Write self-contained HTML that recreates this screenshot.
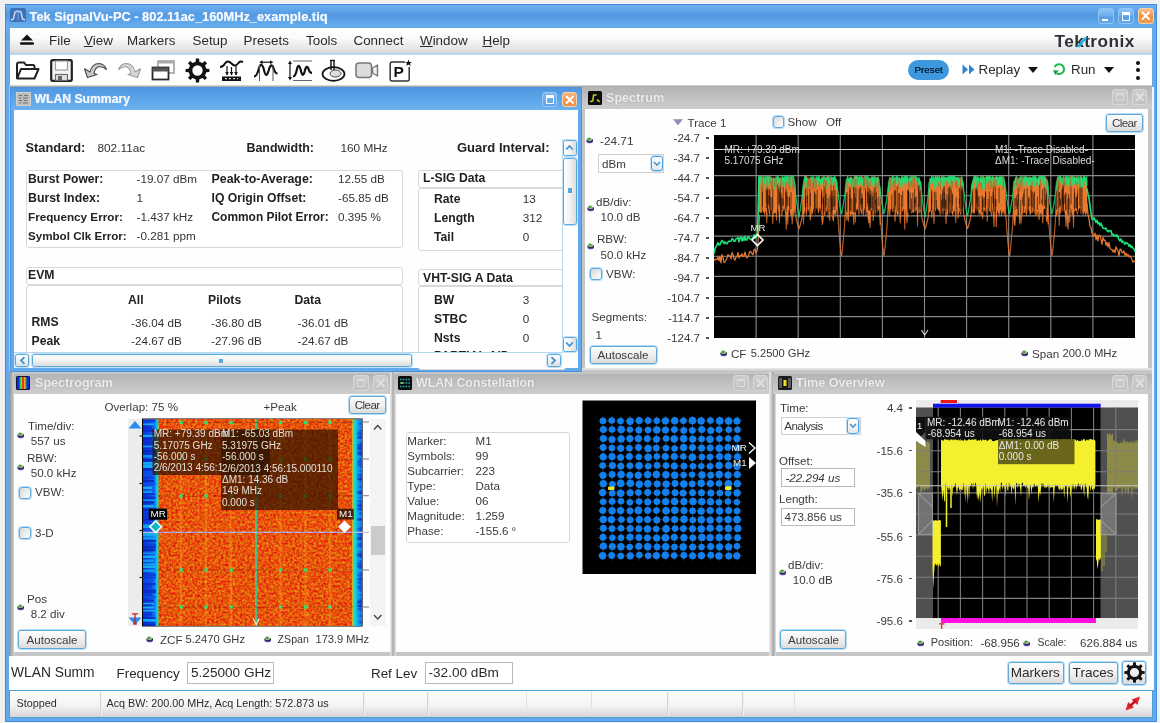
<!DOCTYPE html><html><head><meta charset="utf-8"><title>SignalVu</title><style>
html,body{margin:0;padding:0;}
body{width:1160px;height:723px;position:relative;overflow:hidden;background:#f0f0f0;font-family:"Liberation Sans",sans-serif;}
div,span.t,svg{position:absolute;box-sizing:border-box;}
span.t{white-space:pre;}
.btn{border:1px solid #5fa8dc;border-radius:3px;background:linear-gradient(#fdfdfd,#f0f0f0 50%,#dcdcdc);box-shadow:0 0 0 1px #b8dcf4;}
.gb{border:1px solid #d8d8d8;border-radius:3px;background:#fff;}
.tb{border:1px solid #b9b9b9;background:#fff;}
.cb{border:1px solid #5fa8dc;border-radius:3px;background:linear-gradient(135deg,#d8d8d8,#fff);box-shadow:0 0 0 1px #b8dcf4;}
.wt{background:linear-gradient(#b4b4b4,#c4c4c4 60%,#cdcdcd);}
.wtx{color:#f4f4f4;font-weight:bold;text-shadow:0 0 1px #999;}
</style></head><body><div id="root" style="left:0;top:0;width:1160px;height:723px;filter:blur(0.55px);background:#f0f0f0;">
<div style="left:5px;top:4px;width:1152px;height:717.5px;background:#64a9ec;border:1px solid #3f8ce0;"></div>
<div style="left:6px;top:5px;width:1150px;height:22px;background:linear-gradient(#70b2f2,#5299e2 45%,#5ba3e8 70%,#68aeee);"></div>
<svg style="left:10px;top:8px" width="16" height="14" viewBox="0 0 16 14"><rect width="16" height="14" rx="2" fill="#3d72b8"/><path d="M1 12 L3.5 11 L5 4 L8 3 L11 4 L12.5 11 L15 12" stroke="#c8d4f4" stroke-width="1.5" fill="none"/><path d="M8 3V12" stroke="#88a8e0" stroke-width="1"/></svg>
<span class="t " style="left:29.5px;top:8.5px;font-size:12.83px;line-height:15.4px;font-weight:bold;color:#f4f8ff;text-shadow:0 0 1px #cfe2f8;">Tek SignalVu-PC - 802.11ac_160MHz_example.tiq</span>
<div style="left:1098px;top:8px;width:15.5px;height:16.2px;background:linear-gradient(#8cc2f6,#6aacec 50%,#5a9fe4 55%,#62a6e8);border:1px solid #8ec4f6;border-radius:3px;"></div>
<div style="left:1102px;top:18.5px;width:6px;height:2.5px;background:#fff;"></div>
<div style="left:1118px;top:8px;width:15.5px;height:16.2px;background:linear-gradient(#8cc2f6,#6aacec 50%,#5a9fe4 55%,#62a6e8);border:1px solid #8ec4f6;border-radius:3px;"></div>
<div style="left:1122px;top:12px;width:8px;height:8.5px;border:1.5px solid #fff;border-top-width:3px;"></div>
<div style="left:1138px;top:8px;width:15.5px;height:16.2px;background:linear-gradient(#f8c090,#f0903c 55%,#f09c50);border:1px solid #f8d0a8;border-radius:3px;"></div>
<svg style="left:1138px;top:8.3px" width="15.5" height="15.5" viewBox="0 0 15.5 15.5"><path d="M4 4 L11.5 11.5 M11.5 4 L4 11.5" stroke="#fff" stroke-width="2"/></svg>
<div style="left:10px;top:27.5px;width:1142px;height:25.5px;background:linear-gradient(#ffffff,#fbfbfb 40%,#e4e4e4 85%,#d4d4d4);"></div>
<svg style="left:19px;top:34px" width="16" height="12" viewBox="0 0 16 12"><path d="M8 0.5 L14 6.5 H2 Z" fill="#111"/><rect x="1" y="8.2" width="14" height="2.6" rx="1" fill="#111"/></svg>
<span class="t " style="left:49px;top:33.0px;font-size:13.4px;line-height:16.1px;color:#2a2a2a;">File</span>
<span class="t " style="left:84px;top:33.0px;font-size:13.4px;line-height:16.1px;color:#2a2a2a;"><u>V</u>iew</span>
<span class="t " style="left:127px;top:33.0px;font-size:13.4px;line-height:16.1px;color:#2a2a2a;">Markers</span>
<span class="t " style="left:192.5px;top:33.0px;font-size:13.4px;line-height:16.1px;color:#2a2a2a;">Setup</span>
<span class="t " style="left:243.5px;top:33.0px;font-size:13.4px;line-height:16.1px;color:#2a2a2a;">Presets</span>
<span class="t " style="left:306px;top:33.0px;font-size:13.4px;line-height:16.1px;color:#2a2a2a;">Tools</span>
<span class="t " style="left:353.5px;top:33.0px;font-size:13.4px;line-height:16.1px;color:#2a2a2a;">Connect</span>
<span class="t " style="left:420px;top:33.0px;font-size:13.4px;line-height:16.1px;color:#2a2a2a;"><u>W</u>indow</span>
<span class="t " style="left:482.5px;top:33.0px;font-size:13.4px;line-height:16.1px;color:#2a2a2a;"><u>H</u>elp</span>
<span class="t tek" style="left:1054.5px;top:30.9px;font-size:17.2px;line-height:20.6px;font-weight:bold;color:#2e3038;letter-spacing:0.45px;">Tektronix</span>
<svg style="left:1070px;top:33px" width="20" height="16" viewBox="1070 33 20 16"><path d="M1076.2 47.3 L1084.3 37.4 L1087.6 37.4 L1079.6 47.3 Z" fill="#1cb4e4"/></svg>
<div style="left:10px;top:54.5px;width:1142px;height:30.5px;background:#fff;"></div>
<div style="left:10px;top:53px;width:1142px;height:1.5px;background:#bcd8f0;"></div>
<div style="left:9px;top:84.6px;width:1143px;height:2.4px;background:linear-gradient(#e4e4e4,#9a9a9a);"></div>
<svg style="left:15px;top:59px;" width="25" height="22" viewBox="0 0 25 22"><path d="M2 19.5 V5.5 Q2 3.5 4 3.5 H9 L11 6 H18 Q19.5 6 19.5 8 V9.5" fill="none" stroke="#222" stroke-width="2"/><path d="M2.2 19.5 L6 10 H23.5 L19.5 19.5 Z" fill="#fff" stroke="#222" stroke-width="2" stroke-linejoin="round"/></svg>
<svg style="left:49.5px;top:59px;" width="23" height="23" viewBox="0 0 23 23"><rect x="1.2" y="1.2" width="20.6" height="20.6" rx="1.5" fill="#f4f4f4" stroke="#222" stroke-width="2.2"/><rect x="5.5" y="2" width="12" height="9" fill="#fff" stroke="#9a9a9a" stroke-width="1.2"/><rect x="5.5" y="15.5" width="12" height="6" fill="#e4e4e4" stroke="#6a6a6a" stroke-width="1.2"/><rect x="8" y="17" width="4" height="4" fill="#666"/></svg>
<svg style="left:83px;top:60px;" width="25" height="20" viewBox="0 0 25 20"><path d="M7 12 Q9 3.5 16 3.5 Q21.5 3.8 23.5 9.5 Q20.5 6.5 16.5 6.8 Q12 7.2 11 13.5 L14 14.5 L4.5 17.5 L1.5 8.8 L4.6 10.6 Z" fill="#c8c8c8" stroke="#4a4a4a" stroke-width="1.1" stroke-linejoin="round"/></svg>
<svg style="left:117px;top:60px;" width="25" height="20" viewBox="0 0 25 20"><path d="M18 12 Q16 3.5 9 3.5 Q3.5 3.8 1.5 9.5 Q4.5 6.5 8.5 6.8 Q13 7.2 14 13.5 L11 14.5 L20.5 17.5 L23.5 8.8 L20.4 10.6 Z" fill="#d8d8d8" stroke="#9a9a9a" stroke-width="1.1" stroke-linejoin="round"/></svg>
<svg style="left:150.5px;top:59px;" width="25" height="22" viewBox="0 0 25 22"><rect x="7" y="2" width="16" height="12" fill="#fff" stroke="#8a8a8a" stroke-width="1.3"/><rect x="7" y="2" width="16" height="2.5" fill="#aaa"/><rect x="1.5" y="8.5" width="16" height="12" fill="#fff" stroke="#2a2a2a" stroke-width="1.8"/><rect x="1.5" y="8.5" width="16" height="4" fill="#555"/></svg>
<svg style="left:185px;top:58px;" width="25" height="25" viewBox="0 0 25 25"><path d="M21.31 10.66 L24.40 10.92 L24.40 14.08 L21.31 14.34 L20.03 17.43 L22.03 19.80 L19.80 22.03 L17.43 20.03 L14.34 21.31 L14.08 24.40 L10.92 24.40 L10.66 21.31 L7.57 20.03 L5.20 22.03 L2.97 19.80 L4.97 17.43 L3.69 14.34 L0.60 14.08 L0.60 10.92 L3.69 10.66 L4.97 7.57 L2.97 5.20 L5.20 2.97 L7.57 4.97 L10.66 3.69 L10.92 0.60 L14.08 0.60 L14.34 3.69 L17.43 4.97 L19.80 2.97 L22.03 5.20 L20.03 7.57 Z M17.70 12.50 A5.2 5.2 0 1 0 7.30 12.50 A5.2 5.2 0 1 0 17.70 12.50 Z" fill="#111" fill-rule="evenodd"/></svg>
<svg style="left:219px;top:59px;" width="25" height="23" viewBox="0 0 25 23"><path d="M1 8 Q4 8 6 4.5 Q8.5 0.5 12.5 4.5 Q16 8.5 19 4.5 Q21 1.5 24 3" fill="none" stroke="#111" stroke-width="2"/><path d="M8 7 V16 M12.5 8 V16 M17 7 V16" stroke="#111" stroke-width="1.2"/><path d="M6.2 13 L8 16.5 L9.8 13 Z M10.7 13 L12.5 16.5 L14.3 13 Z M15.2 13 L17 16.5 L18.8 13 Z" fill="#111"/><rect x="3" y="17.5" width="19" height="4.5" fill="#111"/><path d="M6 19.7 H19" stroke="#fff" stroke-width="1" stroke-dasharray="2 2"/></svg>
<svg style="left:253px;top:59px;" width="26" height="23" viewBox="0 0 26 23"><path d="M1 17.5 Q4 17.5 6 9 Q8 2.5 10.5 9 Q13 21 15.5 12 Q18 2.5 20.5 9 Q22 14.5 24.5 14.5" fill="none" stroke="#111" stroke-width="2.1"/><path d="M6.5 6 V22 M20 6 V22" stroke="#555" stroke-width="1"/><path d="M7 3.2 H19.5" stroke="#111" stroke-width="1.2"/><path d="M6.5 3.2 L9.5 1.2 V5.2 Z M20 3.2 L17 1.2 V5.2 Z" fill="#111"/></svg>
<svg style="left:286.5px;top:59px;" width="26" height="23" viewBox="0 0 26 23"><path d="M3 4 V19" stroke="#111" stroke-width="1.2"/><path d="M3 1.5 L5 5 H1 Z M3 21.5 L5 18 H1 Z" fill="#111"/><path d="M6 2 H25 M6 21.5 H25" stroke="#666" stroke-width="1.1"/><path d="M6 17.5 Q8.5 17.5 10 10 Q11.5 3.5 13.5 10 Q15.5 19.5 17.5 13 Q19.5 4.5 21.5 10 Q22.5 14 25 14" fill="none" stroke="#111" stroke-width="2.2"/></svg>
<svg style="left:320.5px;top:59px;" width="25" height="23" viewBox="0 0 25 23"><ellipse cx="12.5" cy="15" rx="11" ry="6.8" fill="#fff" stroke="#111" stroke-width="1.7"/><ellipse cx="14.5" cy="14.5" rx="5.5" ry="3.5" fill="#ddd" stroke="#444" stroke-width="1"/><path d="M10 2 V11 M13 2 V11" stroke="#111" stroke-width="1.4"/><path d="M9 1.5 H14" stroke="#111" stroke-width="1.4"/></svg>
<svg style="left:354.5px;top:61px;" width="24" height="19" viewBox="0 0 24 19"><rect x="1" y="2" width="15.5" height="14.5" rx="3" fill="#dcdcdc" stroke="#777" stroke-width="1.5"/><path d="M17.5 7 L22.5 4 V15 L17.5 12 Z" fill="#eee" stroke="#777" stroke-width="1.4" stroke-linejoin="round"/></svg>
<svg style="left:388.5px;top:59px;" width="24" height="23" viewBox="0 0 24 23"><rect x="1.2" y="3" width="19" height="19" rx="2" fill="#fff" stroke="#333" stroke-width="1.5"/><rect x="16" y="1" width="7" height="7" fill="#fff"/><path d="M19.5 0.5 L20.4 2.9 L22.9 3 L21 4.6 L21.7 7 L19.5 5.6 L17.3 7 L18 4.6 L16.1 3 L18.6 2.9 Z" fill="#111"/></svg>
<span class="t " style="left:393.5px;top:62.7px;font-size:15.5px;line-height:18.6px;font-weight:bold;color:#111;">P</span>
<div style="left:907.5px;top:60px;width:41.0px;height:20px;background:#3e98de;border-radius:10px;"></div>
<span class="t " style="left:914.5px;top:64.1px;font-size:9.8px;line-height:11.8px;color:#0a2038;text-shadow:0 0 0.6px #0a2038;">Preset</span>
<svg style="left:962px;top:63.5px" width="14" height="11" viewBox="0 0 14 11"><path d="M0.5 0.5 L6 5.5 L0.5 10.5 Z M7 0.5 L12.5 5.5 L7 10.5 Z" fill="#2d86d6"/></svg>
<span class="t " style="left:978.5px;top:61.7px;font-size:13.4px;line-height:16.1px;color:#2a2a2a;">Replay</span>
<svg style="left:1027.5px;top:66.5px" width="10" height="6" viewBox="0 0 10 6"><path d="M0 0 H10 L5 6 Z" fill="#111"/></svg>
<svg style="left:1052px;top:62px" width="14" height="14" viewBox="0 0 14 14"><path d="M2.6 5.2 A4.9 4.9 0 1 1 4.6 11.3" stroke="#24b850" stroke-width="2.1" fill="none"/><path d="M1 8.2 L6.6 8.6 L3.2 13 Z" fill="#189840"/></svg>
<span class="t " style="left:1071px;top:61.7px;font-size:13.4px;line-height:16.1px;color:#2a2a2a;">Run</span>
<svg style="left:1103.5px;top:66.5px" width="10" height="6" viewBox="0 0 10 6"><path d="M0 0 H10 L5 6 Z" fill="#111"/></svg>
<div style="left:1135.6px;top:60.5px;width:4.2px;height:4.2px;background:#111;border-radius:2.2px;"></div>
<div style="left:1135.6px;top:68.30000000000001px;width:4.2px;height:4.2px;background:#111;border-radius:2.2px;"></div>
<div style="left:1135.6px;top:76.10000000000001px;width:4.2px;height:4.2px;background:#111;border-radius:2.2px;"></div>
<div style="left:8.7px;top:87px;width:1143.3px;height:568.5px;background:#c0c0c0;"></div>
<div style="left:1152px;top:87px;width:1.6px;height:602.5px;background:#f0f6fc;"></div>
<div style="left:582px;top:87px;width:570px;height:285px;background:#c4c4c4;"></div>
<div class="wt" style="left:582px;top:87.2px;width:570px;height:21.8px;"></div>
<svg style="left:587.5px;top:91px" width="14" height="14" viewBox="0 0 14 14"><rect width="14" height="14" rx="1.5" fill="#0c0c0c"/><path d="M2.2 10.8 L4.8 9.8 L5.6 4 H8.6 M8.8 8.6 L11.6 10.8" fill="none" stroke="#c4cc20" stroke-width="1.6" stroke-linejoin="round"/></svg>
<span class="t " style="left:606px;top:90.8px;font-size:12.6px;line-height:15.1px;font-weight:bold;color:#ececec;text-shadow:0 0 1.5px #9a9a9a;">Spectrum</span>
<div style="left:1112px;top:88.7px;width:15.5px;height:16.0px;border:1px solid #d8d8d8;border-radius:3px;background:linear-gradient(#cdcdcd,#c2c2c2);"></div>
<div style="left:1116px;top:92.7px;width:8px;height:8.0px;border:1.3px solid #dcdcdc;border-top-width:2.6px;border-radius:1px;"></div>
<div style="left:1131.5px;top:88.7px;width:15.5px;height:16.0px;border:1px solid #d8d8d8;border-radius:3px;background:linear-gradient(#cdcdcd,#c2c2c2);"></div>
<svg style="left:1131.5px;top:88.7px;" width="15.5" height="16" viewBox="0 0 15.5 16"><path d="M4 4 L11.5 12 M11.5 4 L4 12" stroke="#e0e0e0" stroke-width="1.9"/></svg>
<div style="left:582px;top:367.8px;width:570px;height:4.7px;background:linear-gradient(#ececec,#d4d4d4 50%,#bcbcbc);"></div>
<div style="left:584.5px;top:109px;width:563.8px;height:259px;background:#fefefe;"></div>
<svg style="left:586px;top:137.3px;" width="7.6" height="6.8" viewBox="0 0 9 8"><ellipse cx="4.4" cy="4.9" rx="3.8" ry="2.5" fill="#5a4cc0"/><ellipse cx="4.4" cy="3.9" rx="3.9" ry="2.1" fill="#2a2a30"/><ellipse cx="4.2" cy="2.9" rx="3.1" ry="1.9" fill="#b4b8c0"/><ellipse cx="3.6" cy="2.2" rx="1.9" ry="1.5" fill="#48a830"/></svg>
<span class="t " style="left:600px;top:133.6px;font-size:11.8px;line-height:14.2px;color:#3a3a3a;">-24.71</span>
<div style="left:598px;top:154px;width:65.5px;height:18.5px;border:1px solid #d0d0d0;background:#fff;"></div>
<span class="t " style="left:602px;top:157.1px;font-size:11.6px;line-height:13.9px;color:#3a3a3a;">dBm</span>
<div style="left:650.5px;top:155.7px;width:12.5px;height:15.5px;border:1.6px solid #4aa0e0;border-radius:3px;background:linear-gradient(#fff,#e8e8e8);box-shadow:0 0 0 1px #c0e0f6;"></div>
<svg style="left:653px;top:160.5px;" width="8" height="6" viewBox="0 0 8 6"><path d="M1 1 L4 4.2 L7 1" fill="none" stroke="#3c94d6" stroke-width="1.6"/></svg>
<span class="t " style="left:596px;top:194.8px;font-size:11.6px;line-height:13.9px;color:#3a3a3a;">dB/div:</span>
<svg style="left:587px;top:205.3px;" width="7.6" height="6.8" viewBox="0 0 9 8"><ellipse cx="4.4" cy="4.9" rx="3.8" ry="2.5" fill="#5a4cc0"/><ellipse cx="4.4" cy="3.9" rx="3.9" ry="2.1" fill="#2a2a30"/><ellipse cx="4.2" cy="2.9" rx="3.1" ry="1.9" fill="#b4b8c0"/><ellipse cx="3.6" cy="2.2" rx="1.9" ry="1.5" fill="#48a830"/></svg>
<span class="t " style="left:600.5px;top:209.8px;font-size:11.6px;line-height:13.9px;color:#3a3a3a;">10.0 dB</span>
<span class="t " style="left:597px;top:232.1px;font-size:11.6px;line-height:13.9px;color:#3a3a3a;">RBW:</span>
<svg style="left:587px;top:243.3px;" width="7.6" height="6.8" viewBox="0 0 9 8"><ellipse cx="4.4" cy="4.9" rx="3.8" ry="2.5" fill="#5a4cc0"/><ellipse cx="4.4" cy="3.9" rx="3.9" ry="2.1" fill="#2a2a30"/><ellipse cx="4.2" cy="2.9" rx="3.1" ry="1.9" fill="#b4b8c0"/><ellipse cx="3.6" cy="2.2" rx="1.9" ry="1.5" fill="#48a830"/></svg>
<span class="t " style="left:600.5px;top:247.6px;font-size:11.6px;line-height:13.9px;color:#3a3a3a;">50.0 kHz</span>
<div class="cb" style="left:590px;top:268px;width:12px;height:11.5px;"></div>
<span class="t " style="left:606px;top:266.7px;font-size:11.6px;line-height:13.9px;color:#3a3a3a;">VBW:</span>
<span class="t " style="left:591.5px;top:309.9px;font-size:11.6px;line-height:13.9px;color:#3a3a3a;">Segments:</span>
<span class="t " style="left:595.5px;top:328.4px;font-size:11.6px;line-height:13.9px;color:#3a3a3a;">1</span>
<div class="btn" style="left:589.5px;top:345.5px;width:67.5px;height:18.5px;"></div>
<span class="t " style="left:597.5px;top:347.9px;font-size:11.6px;line-height:13.9px;color:#3a3a3a;">Autoscale</span>
<svg style="left:672.5px;top:118.5px;" width="10" height="6.5" viewBox="0 0 10 6.5"><path d="M0.3 0.3 H9.7 L5 6.2 Z" fill="#8c8cc4" stroke="#a8a8a8" stroke-width="0.6"/></svg>
<span class="t " style="left:687.5px;top:115.8px;font-size:11.6px;line-height:13.9px;color:#3a3a3a;">Trace 1</span>
<div class="cb" style="left:772.5px;top:116px;width:11.5px;height:11.5px;"></div>
<span class="t " style="left:787.5px;top:115.3px;font-size:11.6px;line-height:13.9px;color:#3a3a3a;">Show</span>
<span class="t " style="left:826px;top:115.3px;font-size:11.6px;line-height:13.9px;color:#3a3a3a;">Off</span>
<div class="btn" style="left:1106px;top:113.5px;width:37px;height:18.0px;"></div>
<span class="t " style="left:1112px;top:115.6px;font-size:11.6px;line-height:13.9px;color:#3a3a3a;letter-spacing:-0.6px;">Clear</span>
<span class="t" style="right:460px;top:131.1px;font-size:11.6px;line-height:13.9px;color:#3a3a3a;">-24.7</span>
<div style="left:705.5px;top:137.2px;width:3.0px;height:1.4px;background:#555;"></div>
<span class="t" style="right:460px;top:151.1px;font-size:11.6px;line-height:13.9px;color:#3a3a3a;">-34.7</span>
<div style="left:705.5px;top:157.2px;width:3.0px;height:1.4px;background:#555;"></div>
<span class="t" style="right:460px;top:171.1px;font-size:11.6px;line-height:13.9px;color:#3a3a3a;">-44.7</span>
<div style="left:705.5px;top:177.2px;width:3.0px;height:1.4px;background:#555;"></div>
<span class="t" style="right:460px;top:191.1px;font-size:11.6px;line-height:13.9px;color:#3a3a3a;">-54.7</span>
<div style="left:705.5px;top:197.2px;width:3.0px;height:1.4px;background:#555;"></div>
<span class="t" style="right:460px;top:211.1px;font-size:11.6px;line-height:13.9px;color:#3a3a3a;">-64.7</span>
<div style="left:705.5px;top:217.2px;width:3.0px;height:1.4px;background:#555;"></div>
<span class="t" style="right:460px;top:231.1px;font-size:11.6px;line-height:13.9px;color:#3a3a3a;">-74.7</span>
<div style="left:705.5px;top:237.2px;width:3.0px;height:1.4px;background:#555;"></div>
<span class="t" style="right:460px;top:251.1px;font-size:11.6px;line-height:13.9px;color:#3a3a3a;">-84.7</span>
<div style="left:705.5px;top:257.2px;width:3.0px;height:1.4px;background:#555;"></div>
<span class="t" style="right:460px;top:271.1px;font-size:11.6px;line-height:13.9px;color:#3a3a3a;">-94.7</span>
<div style="left:705.5px;top:277.2px;width:3.0px;height:1.4px;background:#555;"></div>
<span class="t" style="right:460px;top:291.1px;font-size:11.6px;line-height:13.9px;color:#3a3a3a;">-104.7</span>
<div style="left:705.5px;top:297.2px;width:3.0px;height:1.4px;background:#555;"></div>
<span class="t" style="right:460px;top:311.1px;font-size:11.6px;line-height:13.9px;color:#3a3a3a;">-114.7</span>
<div style="left:705.5px;top:317.2px;width:3.0px;height:1.4px;background:#555;"></div>
<span class="t" style="right:460px;top:331.1px;font-size:11.6px;line-height:13.9px;color:#3a3a3a;">-124.7</span>
<div style="left:705.5px;top:337.2px;width:3.0px;height:1.4px;background:#555;"></div>
<svg style="left:0;top:0" width="1160" height="380" viewBox="0 0 1160 380"><rect x="714" y="135" width="421" height="203" fill="#000"/><path d="M756.1 135 V338 M798.2 135 V338 M840.3 135 V338 M882.4 135 V338 M924.5 135 V338 M966.6 135 V338 M1008.7 135 V338 M1050.8 135 V338 M1092.9 135 V338 M714 175.6 H1135 M714 195.8 H1135 M714 215.9 H1135 M714 236.1 H1135 M714 256.2 H1135 M714 276.4 H1135 M714 296.5 H1135 M714 316.6 H1135 " stroke="#8a8a8a" stroke-width="1.1" fill="none"/><path d="M714 149.5 H1135" stroke="#e0e0e0" stroke-width="1.1"/><path d="M714.0 259.6 L715.0 260.2 L716.0 259.0 L717.0 259.5 L718.0 256.8 L719.0 260.9 L720.0 256.3 L721.0 262.9 L722.0 254.5 L723.0 257.4 L724.0 262.5 L725.0 262.0 L726.0 260.2 L727.0 258.0 L728.0 254.5 L729.0 256.1 L730.0 255.7 L731.0 258.9 L732.0 252.4 L733.0 254.7 L734.0 258.8 L735.0 260.0 L736.0 256.9 L737.0 256.8 L738.0 252.5 L739.0 258.0 L740.0 255.5 L741.0 256.0 L742.0 253.7 L743.0 256.7 L744.0 256.0 L745.0 252.0 L746.0 256.4 L747.0 257.8 L748.0 256.6 L749.0 254.0 L750.0 251.3 L751.0 251.9 L752.0 253.7 L753.0 254.9 L754.0 249.9 L755.0 249.0 L756.0 253.2 L757.0 250.8 M1087.0 203.2 L1088.0 214.3 L1089.0 219.0 L1090.0 226.3 L1091.0 227.4 L1092.0 233.4 L1093.0 235.4 L1094.0 235.8 L1095.0 233.1 L1096.0 240.0 L1097.0 234.8 L1098.0 241.0 L1099.0 235.0 L1100.0 235.6 L1101.0 239.3 L1102.0 244.4 L1103.0 237.4 L1104.0 240.4 L1105.0 240.0 L1106.0 245.3 L1107.0 242.2 L1108.0 247.2 L1109.0 242.4 L1110.0 248.1 L1111.0 249.4 L1112.0 249.5 L1113.0 252.0 L1114.0 249.9 L1115.0 252.7 L1116.0 246.6 L1117.0 249.3 L1118.0 250.6 L1119.0 256.2 L1120.0 249.1 L1121.0 249.3 L1122.0 252.8 L1123.0 252.6 L1124.0 250.9 L1125.0 255.6 L1126.0 253.1 L1127.0 255.5 L1128.0 254.3 L1129.0 257.0 L1130.0 256.0 L1131.0 257.3 L1132.0 259.9 L1133.0 262.3 L1134.0 260.9 L1135.0 261.3 M757.5 250.8 L759.5 214.9" stroke="#ea7a30" stroke-width="1.2" fill="none" stroke-linejoin="round"/><path d="M758.5 181.0 L759.2 178.7 L760.0 175.7 L760.8 178.2 L761.5 177.2 L762.2 179.1 L763.0 176.6 L763.8 177.6 L764.5 180.1 L765.2 176.4 L766.0 178.9 L766.8 178.0 L767.5 178.6 L768.2 178.0 L769.0 175.8 L769.8 179.9 L770.5 176.5 L771.2 177.0 L772.0 179.7 L772.8 180.6 L773.5 177.6 L774.2 178.1 L775.0 179.0 L775.8 180.9 L776.5 180.2 L777.2 178.2 L778.0 176.5 L778.8 178.3 L779.5 178.2 L780.2 179.5 L781.0 177.2 L781.8 180.2 L782.5 178.4 L783.2 178.3 L784.0 179.3 L784.8 180.6 L785.5 180.0 L786.2 178.9 L787.0 176.7 L787.8 176.1 L788.5 178.4 L789.2 176.4 L790.0 180.2 L790.8 180.0 L791.5 176.7 L792.2 179.5 L793.0 176.2 L793.8 181.7 L794.5 187.4 L795.2 189.0 L796.0 217.4 L796.8 220.4 L797.5 223.0 L798.2 225.4 L799.0 227.7 L799.8 225.4 L800.5 223.0 L801.2 220.4 L802.0 217.4 L802.8 189.3 L803.5 188.3 L804.2 179.7 L805.0 175.6 L805.8 179.6 L806.5 175.6 L807.2 179.0 L808.0 179.9 L808.8 180.0 L809.5 179.7 L810.2 177.4 L811.0 176.8 L811.8 178.6 L812.5 179.4 L813.2 179.6 L814.0 177.6 L814.8 178.3 L815.5 180.0 L816.2 180.6 L817.0 178.9 L817.8 178.8 L818.5 177.1 L819.2 175.7 L820.0 179.6 L820.8 180.5 L821.5 178.4 L822.2 180.0 L823.0 175.8 L823.8 176.9 L824.5 181.0 L825.2 180.4 L826.0 179.3 L826.8 176.5 L827.5 175.7 L828.2 176.1 L829.0 179.0 L829.8 179.6 L830.5 179.7 L831.2 177.5 L832.0 179.6 L832.8 180.3 L833.5 177.1 L834.2 177.2 L835.0 177.5 L835.8 178.6 L836.5 184.1 L837.2 189.9 L838.0 216.6 L838.8 228.3 L839.5 237.1 L840.2 244.9 L841.0 252.1 L841.8 254.4 L842.5 247.4 L843.2 239.8 L844.0 231.4 L844.8 221.2 L845.5 188.9 L846.2 184.4 L847.0 181.0 L847.8 180.8 L848.5 179.8 L849.2 179.0 L850.0 176.7 L850.8 177.4 L851.5 179.5 L852.2 179.2 L853.0 180.8 L853.8 177.8 L854.5 176.4 L855.2 175.8 L856.0 175.8 L856.8 176.1 L857.5 178.8 L858.2 179.7 L859.0 176.9 L859.8 180.8 L860.5 179.9 L861.2 180.9 L862.0 177.5 L862.8 176.4 L863.5 179.0 L864.2 179.7 L865.0 176.0 L865.8 178.1 L866.5 179.8 L867.2 176.6 L868.0 177.2 L868.8 177.5 L869.5 180.1 L870.2 178.6 L871.0 178.9 L871.8 177.4 L872.5 179.5 L873.2 177.3 L874.0 179.4 L874.8 176.0 L875.5 180.6 L876.2 180.0 L877.0 177.7 L877.8 178.8 L878.5 176.8 L879.2 184.8 L880.0 188.6 L880.8 221.2 L881.5 231.4 L882.2 239.8 L883.0 247.4 L883.8 254.4 L884.5 252.1 L885.2 244.9 L886.0 237.1 L886.8 228.3 L887.5 216.6 L888.2 188.9 L889.0 180.8 L889.8 177.3 L890.5 180.9 L891.2 178.6 L892.0 178.8 L892.8 176.8 L893.5 175.9 L894.2 179.1 L895.0 178.8 L895.8 177.6 L896.5 178.6 L897.2 176.3 L898.0 178.9 L898.8 181.0 L899.5 178.6 L900.2 180.5 L901.0 178.8 L901.8 176.2 L902.5 179.3 L903.2 176.8 L904.0 180.3 L904.8 178.6 L905.5 180.7 L906.2 175.8 L907.0 178.7 L907.8 180.6 L908.5 180.6 L909.2 178.1 L910.0 179.0 L910.8 179.5 L911.5 176.2 L912.2 176.7 L913.0 176.8 L913.8 180.4 L914.5 179.2 L915.2 177.9 L916.0 177.1 L916.8 179.7 L917.5 180.4 L918.2 180.6 L919.0 177.5 L919.8 182.6 L920.5 187.5 L921.2 192.7 L922.0 217.4 L922.8 220.4 L923.5 223.0 L924.2 225.4 L925.0 227.7 L925.8 225.4 L926.5 223.0 L927.2 220.4 L928.0 217.4 L928.8 189.7 L929.5 187.1 L930.2 178.0 L931.0 179.9 L931.8 179.9 L932.5 178.9 L933.2 180.0 L934.0 180.1 L934.8 180.8 L935.5 176.3 L936.2 180.4 L937.0 175.9 L937.8 176.8 L938.5 180.6 L939.2 175.7 L940.0 179.3 L940.8 177.7 L941.5 177.4 L942.2 176.7 L943.0 179.2 L943.8 179.3 L944.5 176.9 L945.2 177.5 L946.0 179.5 L946.8 180.4 L947.5 177.7 L948.2 177.2 L949.0 176.9 L949.8 177.0 L950.5 176.7 L951.2 175.6 L952.0 177.1 L952.8 179.2 L953.5 176.0 L954.2 177.3 L955.0 178.1 L955.8 177.4 L956.5 179.4 L957.2 177.7 L958.0 177.3 L958.8 176.9 L959.5 180.8 L960.2 179.0 L961.0 180.1 L961.8 176.2 L962.5 180.5 L963.2 185.0 L964.0 214.7 L964.8 218.4 L965.5 221.3 L966.2 223.9 L967.0 226.2 L967.8 227.0 L968.5 224.7 L969.2 222.2 L970.0 219.5 L970.8 216.1 L971.5 190.3 L972.2 186.8 L973.0 180.1 L973.8 176.4 L974.5 177.1 L975.2 177.3 L976.0 175.9 L976.8 179.7 L977.5 175.8 L978.2 179.4 L979.0 179.7 L979.8 179.4 L980.5 177.6 L981.2 178.7 L982.0 177.8 L982.8 175.8 L983.5 181.0 L984.2 178.2 L985.0 177.1 L985.8 177.6 L986.5 176.5 L987.2 176.2 L988.0 177.0 L988.8 175.8 L989.5 176.5 L990.2 178.2 L991.0 178.5 L991.8 180.3 L992.5 176.5 L993.2 177.5 L994.0 176.7 L994.8 179.5 L995.5 180.9 L996.2 176.9 L997.0 177.5 L997.8 177.4 L998.5 177.3 L999.2 179.2 L1000.0 175.6 L1000.8 180.7 L1001.5 176.1 L1002.2 177.7 L1003.0 180.7 L1003.8 176.3 L1004.5 183.1 L1005.2 188.1 L1006.0 216.6 L1006.8 228.3 L1007.5 237.1 L1008.2 244.9 L1009.0 252.1 L1009.8 254.4 L1010.5 247.4 L1011.2 239.8 L1012.0 231.4 L1012.8 221.2 L1013.5 190.4 L1014.2 184.6 L1015.0 179.5 L1015.8 177.2 L1016.5 176.2 L1017.2 179.1 L1018.0 181.0 L1018.8 179.9 L1019.5 177.0 L1020.2 176.8 L1021.0 180.5 L1021.8 177.4 L1022.5 177.6 L1023.2 180.9 L1024.0 176.6 L1024.8 177.2 L1025.5 176.5 L1026.2 176.1 L1027.0 181.0 L1027.8 177.7 L1028.5 177.7 L1029.2 179.4 L1030.0 177.1 L1030.8 177.6 L1031.5 177.8 L1032.2 179.3 L1033.0 180.4 L1033.8 180.2 L1034.5 176.0 L1035.2 177.4 L1036.0 178.1 L1036.8 178.8 L1037.5 180.1 L1038.2 178.0 L1039.0 176.7 L1039.8 176.4 L1040.5 180.0 L1041.2 175.6 L1042.0 177.4 L1042.8 177.2 L1043.5 178.3 L1044.2 175.8 L1045.0 180.2 L1045.8 178.4 L1046.5 178.5 L1047.2 182.3 L1048.0 190.2 L1048.8 221.2 L1049.5 231.4 L1050.2 239.8 L1051.0 247.4 L1051.8 254.4 L1052.5 252.1 L1053.2 244.9 L1054.0 237.1 L1054.8 228.3 L1055.5 216.6 L1056.2 185.6 L1057.0 184.6 L1057.8 177.7 L1058.5 177.9 L1059.2 175.8 L1060.0 176.7 L1060.8 176.8 L1061.5 180.8 L1062.2 178.8 L1063.0 177.2 L1063.8 176.0 L1064.5 180.2 L1065.2 180.9 L1066.0 179.8 L1066.8 178.5 L1067.5 179.6 L1068.2 180.9 L1069.0 177.6 L1069.8 179.5 L1070.5 176.1 L1071.2 180.6 L1072.0 176.2 L1072.8 177.6 L1073.5 177.6 L1074.2 176.6 L1075.0 178.4 L1075.8 178.7 L1076.5 176.8 L1077.2 175.9 L1078.0 178.9 L1078.8 178.2 L1079.5 180.2 L1080.2 177.3 L1081.0 176.0 L1081.8 178.9 L1082.5 180.6 L1083.2 177.1 L1084.0 175.6 L1084.8 176.2 L1085.5 178.3 L1086.2 178.9 L1087.0 180.6 L1087.0 214.0 L1086.2 211.9 L1085.5 214.9 L1084.8 211.4 L1084.0 211.8 L1083.2 214.7 L1082.5 213.2 L1081.8 208.1 L1081.0 214.1 L1080.2 208.4 L1079.5 207.3 L1078.8 209.1 L1078.0 212.0 L1077.2 214.4 L1076.5 209.4 L1075.8 211.3 L1075.0 210.5 L1074.2 210.1 L1073.5 227.9 L1072.8 213.1 L1072.0 214.9 L1071.2 208.9 L1070.5 208.1 L1069.8 222.7 L1069.0 211.0 L1068.2 229.6 L1067.5 226.1 L1066.8 215.3 L1066.0 226.9 L1065.2 214.5 L1064.5 210.6 L1063.8 209.3 L1063.0 211.5 L1062.2 210.3 L1061.5 207.1 L1060.8 213.7 L1060.0 207.9 L1059.2 225.9 L1058.5 211.3 L1057.8 209.7 L1057.0 215.5 L1056.2 215.3 L1055.5 218.5 L1054.8 230.2 L1054.0 239.0 L1053.2 246.8 L1052.5 254.0 L1051.8 256.3 L1051.0 249.3 L1050.2 241.7 L1049.5 233.3 L1048.8 223.1 L1048.0 224.6 L1047.2 218.1 L1046.5 221.9 L1045.8 210.7 L1045.0 207.9 L1044.2 209.0 L1043.5 209.6 L1042.8 223.4 L1042.0 211.8 L1041.2 214.7 L1040.5 213.6 L1039.8 212.8 L1039.0 220.1 L1038.2 210.6 L1037.5 212.8 L1036.8 215.7 L1036.0 210.3 L1035.2 215.1 L1034.5 210.3 L1033.8 212.3 L1033.0 209.3 L1032.2 213.0 L1031.5 209.5 L1030.8 213.7 L1030.0 214.7 L1029.2 209.1 L1028.5 211.1 L1027.8 208.3 L1027.0 213.2 L1026.2 215.5 L1025.5 208.2 L1024.8 212.7 L1024.0 213.0 L1023.2 208.9 L1022.5 214.6 L1021.8 214.8 L1021.0 223.6 L1020.2 214.2 L1019.5 224.5 L1018.8 211.1 L1018.0 207.6 L1017.2 215.4 L1016.5 215.9 L1015.8 213.6 L1015.0 226.0 L1014.2 224.2 L1013.5 210.8 L1012.8 223.1 L1012.0 233.3 L1011.2 241.7 L1010.5 249.3 L1009.8 256.3 L1009.0 254.0 L1008.2 246.8 L1007.5 239.0 L1006.8 230.2 L1006.0 218.5 L1005.2 208.0 L1004.5 215.0 L1003.8 212.7 L1003.0 209.9 L1002.2 213.4 L1001.5 215.9 L1000.8 208.8 L1000.0 211.5 L999.2 215.3 L998.5 213.7 L997.8 209.5 L997.0 212.9 L996.2 227.1 L995.5 207.9 L994.8 210.6 L994.0 227.0 L993.2 213.8 L992.5 207.2 L991.8 215.9 L991.0 212.9 L990.2 210.7 L989.5 211.4 L988.8 207.6 L988.0 209.0 L987.2 221.7 L986.5 208.0 L985.8 213.2 L985.0 210.5 L984.2 210.4 L983.5 208.1 L982.8 218.9 L982.0 212.7 L981.2 215.5 L980.5 213.0 L979.8 212.6 L979.0 214.6 L978.2 209.3 L977.5 209.3 L976.8 211.3 L976.0 207.9 L975.2 208.6 L974.5 213.7 L973.8 212.6 L973.0 213.3 L972.2 210.0 L971.5 211.9 L970.8 218.0 L970.0 221.4 L969.2 224.1 L968.5 226.6 L967.8 228.9 L967.0 228.1 L966.2 225.8 L965.5 223.2 L964.8 220.3 L964.0 216.6 L963.2 211.9 L962.5 208.7 L961.8 211.6 L961.0 214.9 L960.2 212.6 L959.5 210.3 L958.8 213.0 L958.0 218.4 L957.2 207.5 L956.5 207.2 L955.8 222.8 L955.0 208.5 L954.2 211.5 L953.5 210.8 L952.8 215.6 L952.0 213.0 L951.2 212.7 L950.5 209.6 L949.8 213.4 L949.0 213.5 L948.2 210.8 L947.5 216.0 L946.8 209.9 L946.0 224.0 L945.2 208.4 L944.5 210.5 L943.8 210.3 L943.0 214.8 L942.2 211.2 L941.5 208.7 L940.8 214.6 L940.0 214.8 L939.2 210.6 L938.5 210.3 L937.8 209.3 L937.0 207.3 L936.2 208.3 L935.5 211.1 L934.8 207.4 L934.0 224.0 L933.2 208.5 L932.5 211.7 L931.8 217.9 L931.0 207.7 L930.2 211.5 L929.5 212.2 L928.8 212.2 L928.0 219.3 L927.2 222.3 L926.5 224.9 L925.8 227.3 L925.0 229.6 L924.2 227.3 L923.5 224.9 L922.8 222.3 L922.0 219.3 L921.2 214.1 L920.5 208.5 L919.8 213.2 L919.0 212.9 L918.2 211.5 L917.5 226.4 L916.8 209.2 L916.0 209.3 L915.2 211.8 L914.5 209.5 L913.8 212.3 L913.0 213.0 L912.2 209.8 L911.5 213.3 L910.8 209.8 L910.0 208.7 L909.2 208.5 L908.5 215.1 L907.8 215.8 L907.0 223.2 L906.2 215.1 L905.5 207.0 L904.8 229.6 L904.0 210.8 L903.2 207.6 L902.5 211.7 L901.8 211.0 L901.0 213.8 L900.2 223.6 L899.5 215.1 L898.8 214.5 L898.0 213.2 L897.2 215.6 L896.5 210.0 L895.8 212.1 L895.0 221.6 L894.2 209.8 L893.5 207.3 L892.8 212.2 L892.0 208.1 L891.2 209.4 L890.5 208.2 L889.8 215.4 L889.0 207.7 L888.2 214.5 L887.5 218.5 L886.8 230.2 L886.0 239.0 L885.2 246.8 L884.5 254.0 L883.8 256.3 L883.0 249.3 L882.2 241.7 L881.5 233.3 L880.8 223.1 L880.0 225.1 L879.2 208.4 L878.5 210.4 L877.8 207.2 L877.0 213.3 L876.2 210.5 L875.5 210.8 L874.8 215.5 L874.0 208.6 L873.2 221.1 L872.5 210.0 L871.8 210.5 L871.0 209.6 L870.2 228.0 L869.5 222.4 L868.8 222.9 L868.0 218.5 L867.2 211.9 L866.5 210.8 L865.8 215.6 L865.0 209.4 L864.2 207.0 L863.5 215.9 L862.8 209.9 L862.0 214.2 L861.2 212.9 L860.5 210.5 L859.8 211.3 L859.0 215.0 L858.2 209.8 L857.5 209.0 L856.8 208.7 L856.0 211.1 L855.2 222.6 L854.5 208.8 L853.8 224.7 L853.0 212.8 L852.2 214.7 L851.5 213.4 L850.8 215.7 L850.0 213.9 L849.2 208.3 L848.5 221.6 L847.8 212.9 L847.0 220.7 L846.2 214.5 L845.5 210.5 L844.8 223.1 L844.0 233.3 L843.2 241.7 L842.5 249.3 L841.8 256.3 L841.0 254.0 L840.2 246.8 L839.5 239.0 L838.8 230.2 L838.0 218.5 L837.2 209.2 L836.5 209.7 L835.8 215.3 L835.0 213.5 L834.2 213.5 L833.5 221.5 L832.8 219.5 L832.0 215.3 L831.2 212.9 L830.5 208.9 L829.8 221.0 L829.0 210.4 L828.2 217.9 L827.5 207.5 L826.8 209.2 L826.0 212.1 L825.2 214.1 L824.5 215.6 L823.8 212.2 L823.0 222.1 L822.2 224.9 L821.5 215.4 L820.8 210.9 L820.0 207.5 L819.2 208.4 L818.5 213.4 L817.8 210.3 L817.0 207.5 L816.2 208.4 L815.5 207.7 L814.8 215.7 L814.0 207.9 L813.2 209.3 L812.5 213.9 L811.8 211.8 L811.0 215.5 L810.2 220.5 L809.5 213.9 L808.8 210.7 L808.0 209.3 L807.2 210.6 L806.5 215.0 L805.8 210.6 L805.0 213.3 L804.2 211.2 L803.5 224.3 L802.8 208.7 L802.0 219.3 L801.2 222.3 L800.5 224.9 L799.8 227.3 L799.0 229.6 L798.2 227.3 L797.5 224.9 L796.8 222.3 L796.0 219.3 L795.2 207.3 L794.5 211.5 L793.8 215.2 L793.0 210.6 L792.2 224.3 L791.5 216.0 L790.8 215.1 L790.0 212.5 L789.2 208.8 L788.5 210.9 L787.8 224.7 L787.0 213.2 L786.2 229.7 L785.5 215.1 L784.8 209.4 L784.0 207.6 L783.2 210.6 L782.5 211.5 L781.8 215.7 L781.0 210.4 L780.2 212.7 L779.5 223.2 L778.8 213.5 L778.0 210.0 L777.2 207.3 L776.5 220.4 L775.8 211.8 L775.0 213.5 L774.2 212.9 L773.5 212.1 L772.8 223.9 L772.0 210.5 L771.2 210.1 L770.5 207.1 L769.8 215.6 L769.0 212.7 L768.2 207.2 L767.5 209.8 L766.8 223.1 L766.0 211.4 L765.2 211.1 L764.5 214.6 L763.8 212.2 L763.0 210.9 L762.2 211.0 L761.5 213.1 L760.8 212.5 L760.0 212.4 L759.2 211.0 L758.5 214.9 Z" fill="#ea7a30" stroke="#ea7a30" stroke-width="0.5" stroke-linejoin="round"/><path d="M878.8 196.6 V206.0 M907.8 189.9 V212.5 M1065.8 192.1 V210.4 M874.3 187.7 V215.3 M1064.8 194.5 V203.9 M944.1 185.9 V215.9 M861.6 198.0 V203.8 M976.6 185.1 V203.4 M945.8 199.7 V211.9 M1037.4 196.6 V209.8 M786.9 192.4 V205.4 M931.6 189.7 V209.5 M825.6 195.3 V208.4 M918.5 185.3 V209.3 M941.5 199.6 V210.3 M805.4 188.8 V207.4 M988.1 199.0 V215.7 M1067.9 198.8 V214.2 M1063.1 184.3 V209.4 M952.2 195.0 V211.0 M959.4 198.9 V204.1 M1071.0 184.5 V204.5 M1041.8 199.3 V203.3 M772.3 197.3 V212.0 M948.8 196.1 V213.5 M762.2 185.1 V213.3 M1076.1 197.3 V208.3 M870.0 189.5 V203.2 M846.4 193.4 V209.8 M870.0 194.8 V208.9 M1046.0 186.8 V204.9 M916.2 196.5 V207.3 M972.7 188.2 V209.8 M1044.4 187.0 V206.0 M859.1 189.3 V212.4 M979.1 196.6 V210.0 M787.3 196.2 V206.2 M832.1 190.6 V215.9 M876.8 198.6 V215.9 M805.6 196.6 V213.2 M870.9 196.6 V207.9 M854.4 193.5 V212.6 M915.2 197.1 V203.2 M783.0 198.6 V204.9 M828.2 198.1 V215.5 M1061.9 189.5 V215.1 M807.6 195.4 V215.3 M824.0 186.2 V211.8 M1046.2 195.6 V215.3 M908.1 190.0 V204.6 M849.9 199.0 V203.9 M821.5 189.6 V203.6 M860.8 186.9 V204.6 M931.7 192.6 V210.4 M931.6 199.2 V204.1 M833.8 185.2 V207.0 M1059.6 192.1 V205.1 M868.4 193.1 V206.8 M1017.3 199.6 V209.0 M956.2 197.5 V209.0 M823.4 199.1 V215.7 M769.9 196.2 V208.2 M778.7 186.6 V205.2 M999.1 187.4 V203.3 M832.8 196.8 V209.5 M972.2 191.4 V205.4 M766.9 188.9 V203.5 M961.2 189.9 V209.1 M962.9 189.1 V207.6 M1046.6 193.3 V208.4 M935.9 191.4 V207.3 M1063.3 197.6 V214.5 M814.4 192.1 V215.8 M854.9 186.7 V212.4 M949.9 186.5 V215.3 M853.5 185.6 V211.9 M873.8 192.9 V209.5 M1059.1 192.2 V207.9 M762.5 191.9 V206.5 M946.9 194.1 V209.0 M791.0 192.0 V209.3 M1074.4 188.5 V208.8 M789.2 196.8 V206.0 M1029.0 196.8 V206.3 M899.2 192.9 V215.3 M919.7 191.7 V206.8 M1032.8 192.0 V207.5 M825.3 187.4 V213.8 M1020.7 199.7 V214.9 M982.6 196.8 V212.3 M1022.7 196.8 V205.3 M1024.3 188.9 V206.2 M1058.1 184.4 V209.7 M872.5 196.7 V210.9 M1062.3 194.3 V203.8 M976.8 185.8 V215.8 M1042.6 189.0 V205.4 M985.5 196.1 V215.8 M962.6 186.0 V212.4 M780.9 197.9 V213.0 M1014.9 198.0 V210.4 M1065.8 194.2 V209.4 M875.8 184.4 V205.1 M1018.2 187.7 V211.5 M985.6 192.3 V207.1 M849.9 187.0 V211.4 M983.0 199.1 V207.3 M1060.5 198.6 V206.8 M1068.6 193.9 V215.5 M869.3 188.5 V209.8 M919.1 184.6 V214.2 M934.4 191.6 V212.7 M826.2 193.3 V206.1 M867.5 185.1 V203.7 M876.4 192.4 V215.3 M895.4 190.5 V206.1 M914.6 199.3 V204.6 M901.4 195.0 V212.9 M940.7 194.3 V215.2 M936.3 200.0 V209.9 M823.0 196.3 V203.7 M810.4 192.8 V206.5 M993.7 195.6 V207.2 M989.3 191.3 V208.6 M914.9 199.3 V214.5 M780.1 185.1 V206.5 M985.6 191.0 V204.7 M899.0 193.2 V212.7 M891.8 194.4 V211.9 M960.2 184.7 V212.2 M779.6 191.6 V203.2 M785.5 190.3 V209.1 M1069.1 197.6 V209.3 M951.3 189.0 V215.8 M859.9 187.5 V214.3 M894.2 190.4 V214.5 M1016.8 195.3 V208.8 M902.7 191.2 V207.1 M962.9 190.6 V206.9 M908.6 191.6 V214.4 M908.4 190.0 V214.7 M1076.4 196.6 V208.2 M978.1 195.9 V206.9 M995.1 199.2 V211.5 M977.4 191.0 V211.5 M834.8 196.3 V210.0 M1077.5 189.5 V212.3 M767.4 190.7 V213.0 M959.6 187.5 V208.2 M1082.0 187.1 V214.9 M781.2 193.3 V213.7 M1031.6 190.3 V210.7 M991.3 196.2 V212.7 M948.4 188.0 V212.2 M942.7 192.7 V215.8 M805.9 196.5 V207.2 M996.0 199.2 V206.6 M944.6 192.5 V209.4 M815.8 194.0 V214.6 M975.6 188.6 V213.5 M897.2 186.3 V210.9 M910.2 192.5 V215.9 M945.4 199.3 V207.6 M786.3 188.8 V212.0 M984.2 197.3 V207.9 M850.1 189.7 V210.0 M769.8 190.0 V211.5 M809.8 189.0 V214.3 M1062.6 188.0 V205.3 M789.6 196.7 V212.6 M847.1 191.8 V212.0 M771.0 197.1 V214.2 M830.0 195.3 V212.1 M870.5 198.1 V205.8 M914.6 189.0 V208.7 M1023.6 193.1 V210.9 M1079.8 187.6 V205.9 M961.5 186.4 V215.5 M871.9 191.0 V208.6 M1028.5 198.6 V211.8 M817.2 189.7 V212.2 M831.6 198.1 V214.3 M834.9 189.8 V206.0 M993.4 184.8 V212.0 M782.2 197.5 V210.1 M949.8 185.5 V203.6 M875.7 199.8 V210.8 M1039.7 185.0 V204.3 M768.7 195.2 V205.3 M849.8 194.7 V212.0 M865.8 191.5 V206.8 M942.7 189.7 V207.7 M856.1 188.2 V203.2 M862.0 193.5 V206.5 M1034.4 191.5 V209.7 M862.4 198.2 V212.8 M962.5 194.6 V212.0 M895.0 190.2 V209.6 M912.9 192.5 V209.9 M1015.9 198.3 V205.9 M769.2 188.8 V203.4 M1018.4 193.9 V206.7 M823.6 197.9 V213.9 M982.1 195.1 V212.7 M908.4 190.4 V210.2 M1045.5 199.9 V214.9 M1031.0 185.2 V206.2 M1074.7 192.7 V209.7 M861.8 197.8 V209.7 M1080.9 185.2 V215.9 M766.3 186.4 V208.1 M943.1 199.0 V208.7 M952.6 193.3 V205.3 M911.4 198.4 V211.8 M831.8 191.2 V210.1 M870.4 193.2 V211.2 M767.7 187.5 V211.5 M831.0 185.2 V212.9 M869.5 199.3 V210.3 M846.4 197.0 V212.4 M780.4 184.5 V213.4 M807.2 187.2 V203.4 M814.7 191.6 V215.5 M865.5 188.1 V213.8 M821.4 194.2 V211.0 M1063.2 184.7 V210.3 M1027.2 188.0 V212.3 M821.7 191.9 V215.6 M851.8 198.7 V211.8 M783.2 187.0 V206.1 M855.4 197.5 V212.1 M1077.5 194.7 V211.2 M993.0 191.9 V203.8 M920.4 190.1 V209.9 M777.7 184.4 V215.8 M868.3 186.4 V210.7 M1056.5 186.9 V209.5 M944.0 187.8 V205.5 M995.3 185.2 V214.2 M772.8 187.0 V209.1 M1033.8 193.9 V212.7 " stroke="#1c0c02" stroke-width="0.9" opacity="0.7" fill="none"/><path d="M758.5 177.0 L759.2 175.7 L760.0 176.3 L760.8 176.4 L761.5 176.0 L762.2 176.7 L763.0 179.3 L763.8 175.9 L764.5 179.5 L765.2 176.2 L766.0 179.0 L766.8 175.5 L767.5 175.4 L768.2 176.3 L769.0 178.1 L769.8 176.2 L770.5 178.4 L771.2 177.6 L772.0 179.3 L772.8 178.1 L773.5 178.8 L774.2 178.5 L775.0 179.3 L775.8 176.7 L776.5 177.7 L777.2 175.6 L778.0 175.9 L778.8 178.3 L779.5 177.6 L780.2 179.0 L781.0 179.3 L781.8 177.8 L782.5 175.4 L783.2 177.8 L784.0 177.1 L784.8 175.9 L785.5 176.7 L786.2 175.4 L787.0 176.9 L787.8 176.4 L788.5 177.1 L789.2 178.1 L790.0 176.3 L790.8 176.7 L791.5 175.9 L792.2 177.2 L793.0 175.4 L793.8 177.2 L794.5 180.5 L795.2 185.0 L796.0 196.2 L796.8 201.9 L797.5 206.8 L798.2 211.2 L799.0 215.4 L799.8 211.2 L800.5 206.8 L801.2 201.9 L802.0 196.2 L802.8 186.4 L803.5 181.7 L804.2 178.6 L805.0 176.1 L805.8 176.0 L806.5 178.4 L807.2 177.5 L808.0 178.6 L808.8 179.2 L809.5 178.5 L810.2 178.1 L811.0 176.8 L811.8 179.7 L812.5 175.4 L813.2 175.5 L814.0 179.3 L814.8 179.7 L815.5 178.6 L816.2 176.0 L817.0 177.2 L817.8 178.2 L818.5 175.4 L819.2 177.0 L820.0 179.5 L820.8 179.6 L821.5 177.4 L822.2 177.3 L823.0 178.2 L823.8 178.7 L824.5 176.3 L825.2 176.9 L826.0 178.1 L826.8 179.3 L827.5 177.2 L828.2 178.3 L829.0 176.2 L829.8 178.9 L830.5 176.4 L831.2 176.7 L832.0 176.9 L832.8 177.4 L833.5 178.2 L834.2 176.5 L835.0 175.8 L835.8 179.3 L836.5 179.5 L837.2 182.3 L838.0 191.0 L838.8 197.5 L839.5 202.5 L840.2 206.8 L841.0 210.9 L841.8 212.1 L842.5 208.2 L843.2 204.0 L844.0 199.3 L844.8 193.6 L845.5 184.2 L846.2 179.5 L847.0 178.1 L847.8 175.6 L848.5 179.3 L849.2 178.2 L850.0 178.7 L850.8 177.5 L851.5 177.1 L852.2 179.0 L853.0 178.4 L853.8 179.7 L854.5 176.6 L855.2 178.7 L856.0 179.3 L856.8 176.3 L857.5 176.5 L858.2 178.9 L859.0 176.8 L859.8 175.5 L860.5 177.6 L861.2 175.3 L862.0 178.0 L862.8 179.1 L863.5 177.7 L864.2 179.0 L865.0 175.7 L865.8 179.1 L866.5 175.7 L867.2 176.0 L868.0 177.4 L868.8 177.3 L869.5 178.4 L870.2 178.8 L871.0 177.7 L871.8 176.4 L872.5 177.8 L873.2 175.7 L874.0 179.0 L874.8 177.1 L875.5 178.1 L876.2 177.1 L877.0 178.8 L877.8 176.8 L878.5 179.2 L879.2 182.7 L880.0 186.0 L880.8 193.6 L881.5 199.3 L882.2 204.0 L883.0 208.2 L883.8 212.1 L884.5 210.9 L885.2 206.8 L886.0 202.5 L886.8 197.5 L887.5 191.0 L888.2 184.9 L889.0 180.2 L889.8 177.3 L890.5 177.7 L891.2 179.7 L892.0 176.6 L892.8 176.1 L893.5 179.6 L894.2 178.5 L895.0 177.4 L895.8 177.6 L896.5 175.5 L897.2 177.4 L898.0 178.6 L898.8 177.1 L899.5 177.6 L900.2 179.3 L901.0 177.9 L901.8 177.0 L902.5 176.6 L903.2 179.6 L904.0 176.3 L904.8 175.8 L905.5 176.6 L906.2 177.0 L907.0 176.7 L907.8 176.2 L908.5 179.0 L909.2 179.7 L910.0 175.5 L910.8 179.1 L911.5 177.3 L912.2 176.2 L913.0 176.9 L913.8 176.6 L914.5 175.7 L915.2 175.5 L916.0 175.7 L916.8 177.7 L917.5 178.6 L918.2 177.7 L919.0 177.6 L919.8 180.9 L920.5 180.7 L921.2 183.7 L922.0 196.2 L922.8 201.9 L923.5 206.8 L924.2 211.2 L925.0 215.4 L925.8 211.2 L926.5 206.8 L927.2 201.9 L928.0 196.2 L928.8 182.9 L929.5 180.5 L930.2 178.6 L931.0 177.8 L931.8 175.5 L932.5 177.9 L933.2 176.0 L934.0 176.9 L934.8 178.6 L935.5 175.5 L936.2 176.6 L937.0 178.7 L937.8 176.4 L938.5 179.6 L939.2 175.6 L940.0 179.2 L940.8 178.7 L941.5 176.0 L942.2 177.3 L943.0 177.0 L943.8 175.4 L944.5 178.4 L945.2 176.9 L946.0 177.0 L946.8 177.6 L947.5 177.9 L948.2 175.9 L949.0 175.9 L949.8 177.0 L950.5 176.2 L951.2 178.9 L952.0 176.3 L952.8 176.3 L953.5 175.6 L954.2 176.0 L955.0 176.4 L955.8 178.4 L956.5 176.9 L957.2 177.9 L958.0 179.2 L958.8 177.4 L959.5 179.4 L960.2 177.1 L961.0 179.3 L961.8 176.9 L962.5 180.7 L963.2 181.8 L964.0 191.2 L964.8 198.2 L965.5 203.6 L966.2 208.3 L967.0 212.6 L967.8 214.0 L968.5 209.8 L969.2 205.2 L970.0 200.1 L970.8 193.9 L971.5 184.2 L972.2 182.6 L973.0 179.9 L973.8 177.8 L974.5 176.3 L975.2 175.9 L976.0 175.8 L976.8 179.1 L977.5 178.8 L978.2 176.7 L979.0 177.8 L979.8 178.8 L980.5 176.1 L981.2 175.9 L982.0 179.4 L982.8 176.6 L983.5 175.4 L984.2 178.8 L985.0 178.7 L985.8 178.8 L986.5 176.4 L987.2 175.9 L988.0 176.9 L988.8 176.7 L989.5 176.2 L990.2 177.0 L991.0 176.5 L991.8 179.0 L992.5 175.8 L993.2 177.6 L994.0 178.9 L994.8 178.9 L995.5 177.1 L996.2 176.3 L997.0 176.9 L997.8 176.7 L998.5 178.6 L999.2 176.8 L1000.0 176.7 L1000.8 176.7 L1001.5 179.5 L1002.2 176.5 L1003.0 176.9 L1003.8 178.1 L1004.5 180.5 L1005.2 183.7 L1006.0 191.0 L1006.8 197.5 L1007.5 202.5 L1008.2 206.8 L1009.0 210.9 L1009.8 212.1 L1010.5 208.2 L1011.2 204.0 L1012.0 199.3 L1012.8 193.6 L1013.5 182.7 L1014.2 180.7 L1015.0 180.1 L1015.8 177.1 L1016.5 176.3 L1017.2 178.8 L1018.0 178.4 L1018.8 179.1 L1019.5 178.8 L1020.2 178.7 L1021.0 175.7 L1021.8 175.8 L1022.5 179.3 L1023.2 179.2 L1024.0 175.4 L1024.8 178.0 L1025.5 177.4 L1026.2 176.9 L1027.0 176.9 L1027.8 177.2 L1028.5 179.4 L1029.2 176.6 L1030.0 177.3 L1030.8 177.3 L1031.5 179.5 L1032.2 177.1 L1033.0 176.8 L1033.8 175.7 L1034.5 178.5 L1035.2 175.4 L1036.0 176.7 L1036.8 179.7 L1037.5 179.7 L1038.2 176.3 L1039.0 178.6 L1039.8 178.6 L1040.5 175.8 L1041.2 179.2 L1042.0 175.8 L1042.8 175.9 L1043.5 176.4 L1044.2 177.8 L1045.0 176.0 L1045.8 179.1 L1046.5 178.9 L1047.2 180.0 L1048.0 182.0 L1048.8 193.6 L1049.5 199.3 L1050.2 204.0 L1051.0 208.2 L1051.8 212.1 L1052.5 210.9 L1053.2 206.8 L1054.0 202.5 L1054.8 197.5 L1055.5 191.0 L1056.2 182.9 L1057.0 179.9 L1057.8 176.4 L1058.5 177.2 L1059.2 177.7 L1060.0 176.7 L1060.8 175.3 L1061.5 179.5 L1062.2 178.0 L1063.0 178.6 L1063.8 178.8 L1064.5 178.3 L1065.2 176.7 L1066.0 175.5 L1066.8 175.4 L1067.5 177.1 L1068.2 177.2 L1069.0 175.8 L1069.8 178.2 L1070.5 179.5 L1071.2 177.7 L1072.0 175.4 L1072.8 177.5 L1073.5 176.0 L1074.2 176.8 L1075.0 179.0 L1075.8 176.7 L1076.5 177.8 L1077.2 178.5 L1078.0 179.3 L1078.8 175.8 L1079.5 177.8 L1080.2 178.7 L1081.0 176.2 L1081.8 177.9 L1082.5 179.5 L1083.2 176.5 L1084.0 176.6 L1084.8 176.6 L1085.5 179.1 L1086.2 177.7 L1087.0 175.5 L1087.0 185.5 L1086.2 185.4 L1085.5 188.4 L1084.8 181.3 L1084.0 181.1 L1083.2 181.0 L1082.5 187.7 L1081.8 187.6 L1081.0 183.0 L1080.2 187.6 L1079.5 184.7 L1078.8 180.7 L1078.0 185.4 L1077.2 184.4 L1076.5 182.4 L1075.8 184.8 L1075.0 184.4 L1074.2 184.1 L1073.5 183.2 L1072.8 185.5 L1072.0 181.4 L1071.2 186.9 L1070.5 186.5 L1069.8 185.1 L1069.0 180.9 L1068.2 185.8 L1067.5 185.1 L1066.8 185.4 L1066.0 183.0 L1065.2 185.8 L1064.5 181.5 L1063.8 184.7 L1063.0 181.5 L1062.2 185.2 L1061.5 185.0 L1060.8 181.1 L1060.0 183.1 L1059.2 183.4 L1058.5 183.3 L1057.8 181.9 L1057.0 189.6 L1056.2 190.6 L1055.5 193.2 L1054.8 199.7 L1054.0 204.7 L1053.2 209.0 L1052.5 213.1 L1051.8 214.3 L1051.0 210.4 L1050.2 206.2 L1049.5 201.5 L1048.8 195.8 L1048.0 186.6 L1047.2 190.3 L1046.5 187.1 L1045.8 189.3 L1045.0 186.2 L1044.2 183.9 L1043.5 182.2 L1042.8 179.1 L1042.0 184.6 L1041.2 181.9 L1040.5 182.1 L1039.8 183.1 L1039.0 181.7 L1038.2 186.7 L1037.5 182.7 L1036.8 185.3 L1036.0 184.6 L1035.2 183.0 L1034.5 186.3 L1033.8 185.4 L1033.0 185.9 L1032.2 180.7 L1031.5 184.3 L1030.8 180.3 L1030.0 187.3 L1029.2 186.0 L1028.5 184.7 L1027.8 186.2 L1027.0 181.9 L1026.2 180.9 L1025.5 180.9 L1024.8 186.0 L1024.0 180.6 L1023.2 187.5 L1022.5 182.3 L1021.8 179.8 L1021.0 178.5 L1020.2 185.6 L1019.5 185.2 L1018.8 183.2 L1018.0 182.9 L1017.2 185.4 L1016.5 185.6 L1015.8 186.5 L1015.0 188.5 L1014.2 187.9 L1013.5 190.0 L1012.8 195.8 L1012.0 201.5 L1011.2 206.2 L1010.5 210.4 L1009.8 214.3 L1009.0 213.1 L1008.2 209.0 L1007.5 204.7 L1006.8 199.7 L1006.0 193.2 L1005.2 189.9 L1004.5 187.0 L1003.8 182.3 L1003.0 187.3 L1002.2 184.4 L1001.5 183.8 L1000.8 185.2 L1000.0 183.5 L999.2 182.8 L998.5 185.4 L997.8 180.0 L997.0 184.5 L996.2 181.9 L995.5 185.2 L994.8 187.6 L994.0 187.7 L993.2 180.1 L992.5 178.9 L991.8 187.3 L991.0 186.5 L990.2 180.0 L989.5 185.6 L988.8 179.8 L988.0 181.5 L987.2 183.4 L986.5 182.8 L985.8 182.5 L985.0 189.0 L984.2 188.0 L983.5 182.3 L982.8 184.9 L982.0 189.8 L981.2 183.9 L980.5 178.7 L979.8 182.3 L979.0 183.7 L978.2 181.9 L977.5 184.4 L976.8 188.6 L976.0 181.9 L975.2 178.9 L974.5 180.8 L973.8 183.2 L973.0 189.0 L972.2 187.6 L971.5 193.3 L970.8 196.1 L970.0 202.3 L969.2 207.4 L968.5 212.0 L967.8 216.2 L967.0 214.8 L966.2 210.5 L965.5 205.8 L964.8 200.4 L964.0 193.4 L963.2 188.2 L962.5 185.1 L961.8 187.2 L961.0 182.1 L960.2 181.8 L959.5 188.1 L958.8 184.8 L958.0 186.2 L957.2 184.1 L956.5 179.9 L955.8 185.3 L955.0 179.6 L954.2 181.7 L953.5 181.1 L952.8 183.9 L952.0 184.3 L951.2 189.2 L950.5 179.1 L949.8 186.4 L949.0 180.1 L948.2 184.1 L947.5 180.7 L946.8 180.5 L946.0 180.2 L945.2 185.5 L944.5 183.1 L943.8 179.3 L943.0 180.1 L942.2 187.7 L941.5 180.2 L940.8 183.0 L940.0 185.4 L939.2 180.8 L938.5 187.0 L937.8 182.6 L937.0 187.0 L936.2 182.5 L935.5 179.9 L934.8 189.0 L934.0 181.1 L933.2 184.0 L932.5 181.1 L931.8 180.5 L931.0 184.6 L930.2 183.2 L929.5 184.2 L928.8 190.1 L928.0 198.4 L927.2 204.1 L926.5 209.0 L925.8 213.4 L925.0 217.6 L924.2 213.4 L923.5 209.0 L922.8 204.1 L922.0 198.4 L921.2 190.2 L920.5 186.8 L919.8 184.8 L919.0 184.1 L918.2 185.4 L917.5 184.2 L916.8 181.7 L916.0 180.5 L915.2 182.8 L914.5 186.1 L913.8 186.5 L913.0 184.7 L912.2 180.1 L911.5 180.4 L910.8 187.3 L910.0 178.9 L909.2 183.8 L908.5 184.3 L907.8 181.1 L907.0 183.1 L906.2 182.4 L905.5 181.7 L904.8 182.6 L904.0 184.7 L903.2 187.4 L902.5 182.3 L901.8 180.0 L901.0 181.0 L900.2 187.6 L899.5 183.6 L898.8 183.1 L898.0 185.0 L897.2 183.2 L896.5 183.3 L895.8 182.2 L895.0 181.0 L894.2 184.1 L893.5 189.7 L892.8 183.0 L892.0 186.2 L891.2 188.7 L890.5 184.7 L889.8 180.8 L889.0 188.3 L888.2 192.4 L887.5 193.2 L886.8 199.7 L886.0 204.7 L885.2 209.0 L884.5 213.1 L883.8 214.3 L883.0 210.4 L882.2 206.2 L881.5 201.5 L880.8 195.8 L880.0 192.7 L879.2 189.6 L878.5 188.3 L877.8 184.5 L877.0 186.6 L876.2 179.7 L875.5 186.8 L874.8 180.2 L874.0 186.2 L873.2 183.6 L872.5 186.1 L871.8 180.5 L871.0 182.6 L870.2 183.0 L869.5 182.8 L868.8 187.6 L868.0 185.6 L867.2 185.1 L866.5 184.8 L865.8 184.0 L865.0 182.1 L864.2 188.1 L863.5 181.4 L862.8 185.8 L862.0 181.7 L861.2 181.6 L860.5 182.3 L859.8 185.6 L859.0 183.7 L858.2 185.2 L857.5 180.4 L856.8 184.6 L856.0 182.1 L855.2 182.6 L854.5 186.8 L853.8 185.2 L853.0 187.3 L852.2 188.6 L851.5 186.2 L850.8 184.3 L850.0 184.3 L849.2 182.6 L848.5 182.4 L847.8 182.5 L847.0 185.1 L846.2 188.0 L845.5 193.1 L844.8 195.8 L844.0 201.5 L843.2 206.2 L842.5 210.4 L841.8 214.3 L841.0 213.1 L840.2 209.0 L839.5 204.7 L838.8 199.7 L838.0 193.2 L837.2 187.7 L836.5 189.4 L835.8 185.3 L835.0 184.0 L834.2 180.2 L833.5 181.4 L832.8 185.4 L832.0 180.2 L831.2 183.6 L830.5 185.4 L829.8 186.4 L829.0 181.5 L828.2 185.2 L827.5 184.7 L826.8 188.9 L826.0 186.6 L825.2 181.6 L824.5 179.8 L823.8 185.5 L823.0 184.4 L822.2 181.4 L821.5 187.7 L820.8 184.0 L820.0 182.5 L819.2 186.7 L818.5 179.8 L817.8 185.2 L817.0 183.9 L816.2 182.5 L815.5 181.5 L814.8 187.3 L814.0 186.2 L813.2 179.6 L812.5 182.8 L811.8 187.3 L811.0 184.6 L810.2 185.6 L809.5 181.5 L808.8 187.2 L808.0 187.3 L807.2 187.9 L806.5 187.8 L805.8 182.6 L805.0 182.2 L804.2 185.9 L803.5 190.4 L802.8 196.8 L802.0 198.4 L801.2 204.1 L800.5 209.0 L799.8 213.4 L799.0 217.6 L798.2 213.4 L797.5 209.0 L796.8 204.1 L796.0 198.4 L795.2 192.0 L794.5 183.6 L793.8 183.8 L793.0 179.5 L792.2 186.0 L791.5 180.3 L790.8 186.6 L790.0 184.7 L789.2 184.8 L788.5 183.9 L787.8 180.5 L787.0 184.3 L786.2 179.5 L785.5 180.7 L784.8 181.8 L784.0 187.3 L783.2 184.2 L782.5 185.7 L781.8 181.9 L781.0 183.4 L780.2 186.0 L779.5 182.4 L778.8 188.4 L778.0 179.6 L777.2 184.5 L776.5 186.4 L775.8 186.5 L775.0 189.6 L774.2 187.5 L773.5 188.9 L772.8 187.8 L772.0 182.5 L771.2 185.0 L770.5 182.4 L769.8 182.5 L769.0 185.8 L768.2 180.0 L767.5 179.0 L766.8 183.7 L766.0 189.3 L765.2 182.1 L764.5 184.2 L763.8 182.4 L763.0 188.9 L762.2 184.6 L761.5 185.8 L760.8 179.0 L760.0 184.4 L759.2 184.2 L758.5 185.4 Z" fill="#16e478" stroke="#16e478" stroke-width="0.6" stroke-linejoin="round" opacity="0.93"/><path d="M994.6 177.3 V190.8 M809.6 178.0 V185.3 M771.1 182.3 V187.7 M789.9 177.3 V190.9 M955.7 182.5 V185.3 M854.3 178.1 V185.8 M826.6 180.8 V186.2 M816.3 180.2 V187.6 M810.2 180.4 V188.6 M914.7 177.2 V189.3 M824.3 179.0 V185.1 M951.2 179.4 V188.8 M1064.6 177.8 V187.7 M990.0 179.2 V189.9 M775.2 178.7 V187.0 M1003.6 181.7 V189.9 M1059.8 178.1 V187.8 M1036.6 181.6 V185.8 M1077.5 181.4 V191.1 M878.6 180.6 V191.7 M947.8 182.3 V192.0 M1032.2 180.9 V191.7 M808.3 179.4 V188.9 M804.4 181.7 V185.4 M852.1 178.9 V189.2 M823.6 179.7 V191.0 M1079.8 178.6 V187.6 M985.4 178.1 V190.9 M826.0 180.3 V187.4 M762.4 177.0 V185.0 M867.7 178.7 V191.9 M783.0 181.3 V186.6 M917.1 181.3 V191.0 M1063.2 179.5 V187.2 M890.0 178.9 V190.2 M911.1 181.1 V186.1 M1014.1 182.8 V186.4 M960.5 178.0 V185.2 M895.3 178.1 V190.1 M946.3 181.0 V191.8 M780.8 177.6 V185.3 M909.9 181.9 V189.8 M938.4 182.1 V187.6 M770.2 178.4 V185.2 M814.0 177.4 V188.7 M956.3 181.9 V187.4 M978.1 181.4 V191.2 M940.4 180.5 V191.0 M980.1 182.8 V187.0 M912.8 177.1 V188.3 M846.8 180.6 V188.6 M780.9 177.8 V189.2 M981.6 182.9 V190.5 M855.4 179.7 V188.5 M1020.9 179.4 V191.4 M917.8 179.4 V188.4 M877.1 183.0 V185.3 M890.7 177.5 V189.7 M810.5 177.9 V188.0 M955.9 181.6 V188.1 M857.0 179.2 V191.2 M830.7 177.1 V191.2 M917.5 177.8 V186.0 M1003.2 177.4 V189.7 M830.9 179.7 V189.2 M778.4 182.6 V187.3 M808.3 181.7 V185.8 M774.0 180.9 V188.3 M1016.6 178.2 V185.3 M956.3 179.8 V187.1 M1057.2 178.3 V189.5 M785.7 182.5 V191.6 M961.0 178.9 V190.1 M1018.0 177.2 V188.5 M807.1 180.3 V191.7 M1040.5 178.5 V188.9 M864.2 178.0 V190.2 M870.4 179.5 V189.9 M996.3 179.8 V185.8 M792.8 178.0 V190.8 M879.4 179.2 V186.2 M1075.8 180.6 V185.9 M988.3 180.6 V189.3 M957.9 182.3 V191.8 M893.0 180.9 V187.6 M894.2 179.2 V189.5 M875.5 179.1 V190.9 M1019.5 181.1 V190.9 M863.5 177.6 V190.6 M1058.7 178.8 V187.6 M807.8 180.8 V191.2 M789.0 178.5 V190.3 M834.7 182.3 V187.5 M914.4 178.2 V187.0 M898.7 178.7 V190.1 M771.7 180.8 V190.6 M867.0 178.1 V185.8 M786.9 181.8 V189.2 M766.9 179.7 V189.2 M864.8 177.2 V187.9 M875.9 182.8 V187.5 M1059.1 182.2 V189.0 M1022.1 177.5 V188.9 M793.3 177.6 V187.9 M812.3 183.0 V189.0 M1070.0 181.5 V189.5 M914.3 181.7 V189.7 M812.9 180.2 V187.9 M991.6 181.1 V189.0 M1016.0 182.0 V185.6 M808.7 177.3 V186.1 M1070.8 178.9 V188.1 M911.8 180.4 V187.0 M868.8 182.1 V190.6 M762.4 180.3 V185.7 M1046.6 177.4 V186.9 M952.3 181.0 V187.9 M929.6 178.2 V188.2 M979.5 177.6 V186.0 M825.6 180.2 V189.1 M763.0 182.9 V190.8 M813.1 182.0 V191.8 M819.4 181.5 V190.7 M1063.8 178.3 V185.8 M815.0 178.4 V191.3 M914.6 177.8 V187.5 M993.8 181.7 V188.1 M909.1 179.8 V187.6 M908.5 181.1 V190.0 M867.1 180.4 V186.0 M776.6 179.3 V187.5 M772.5 177.5 V188.0 M1065.4 182.0 V185.2 M864.0 179.2 V187.2 " stroke="#c06020" stroke-width="0.9" opacity="0.8" fill="none"/><path d="M714.0 253.9 L715.0 248.4 L716.0 246.8 L717.0 244.9 L718.0 242.7 L719.0 244.9 L720.0 244.8 L721.0 241.9 L722.0 240.4 L723.0 241.7 L724.0 243.7 L725.0 241.9 L726.0 243.2 L727.0 243.8 L728.0 241.8 L729.0 241.2 L730.0 241.2 L731.0 241.2 L732.0 238.6 L733.0 239.1 L734.0 241.3 L735.0 241.2 L736.0 238.9 L737.0 238.4 L738.0 237.7 L739.0 241.8 L740.0 237.6 L741.0 237.1 L742.0 240.9 L743.0 237.6 L744.0 240.5 L745.0 236.4 L746.0 240.0 L747.0 239.9 L748.0 236.6 L749.0 237.5 L750.0 239.0 L751.0 239.1 L752.0 238.9 L753.0 238.3 L754.0 234.8 L755.0 237.6 L756.0 237.8 L757.0 234.8 M1087.0 188.6 L1088.0 194.2 L1089.0 198.0 L1090.0 205.9 L1091.0 212.8 L1092.0 219.2 L1093.0 219.5 L1094.0 217.8 L1095.0 220.1 L1096.0 222.5 L1097.0 220.3 L1098.0 223.7 L1099.0 222.4 L1100.0 225.4 L1101.0 223.3 L1102.0 225.9 L1103.0 228.2 L1104.0 228.2 L1105.0 228.8 L1106.0 228.2 L1107.0 230.6 L1108.0 231.8 L1109.0 230.6 L1110.0 231.1 L1111.0 230.6 L1112.0 235.0 L1113.0 234.0 L1114.0 235.8 L1115.0 235.0 L1116.0 236.5 L1117.0 234.8 L1118.0 236.7 L1119.0 239.7 L1120.0 240.9 L1121.0 238.9 L1122.0 242.4 L1123.0 241.2 L1124.0 242.6 L1125.0 244.4 L1126.0 242.4 L1127.0 243.2 L1128.0 243.7 L1129.0 246.2 L1130.0 244.7 L1131.0 247.4 L1132.0 246.4 L1133.0 248.1 L1134.0 249.0 L1135.0 251.7 M757.5 234.8 L759 177.0" stroke="#16e478" stroke-width="1.6" fill="none" stroke-linejoin="round"/><path d="M757.5 234.5 L763 240 L757.5 245.5 L752 240 Z" fill="none" stroke="#fff" stroke-width="1.6"/><path d="M921.5 330 L924.7 335 L928 330" fill="none" stroke="#ddd" stroke-width="1.1"/></svg>
<span class="t " style="left:750.5px;top:222.2px;font-size:9.6px;line-height:11.5px;color:#e8e8e8;">MR</span>
<span class="t " style="left:724.5px;top:143.8px;font-size:10.0px;line-height:12.0px;color:#dcdcdc;">MR: +79.39 dBm</span>
<span class="t " style="left:724.5px;top:154.7px;font-size:10.0px;line-height:12.0px;color:#dcdcdc;">5.17075 GHz</span>
<span class="t " style="left:995px;top:143.8px;font-size:10.0px;line-height:12.0px;color:#dcdcdc;">M1: -Trace Disabled-</span>
<span class="t " style="left:995px;top:154.7px;font-size:10.0px;line-height:12.0px;color:#dcdcdc;">ΔM1: -Trace Disabled-</span>
<svg style="left:719.5px;top:350.3px;" width="7.6" height="6.8" viewBox="0 0 9 8"><ellipse cx="4.4" cy="4.9" rx="3.8" ry="2.5" fill="#5a4cc0"/><ellipse cx="4.4" cy="3.9" rx="3.9" ry="2.1" fill="#2a2a30"/><ellipse cx="4.2" cy="2.9" rx="3.1" ry="1.9" fill="#b4b8c0"/><ellipse cx="3.6" cy="2.2" rx="1.9" ry="1.5" fill="#48a830"/></svg>
<span class="t " style="left:731px;top:346.6px;font-size:11.6px;line-height:13.9px;color:#3a3a3a;">CF</span>
<span class="t " style="left:750.7px;top:346.8px;font-size:11.15px;line-height:13.4px;color:#3a3a3a;">5.2500 GHz</span>
<svg style="left:1020.5px;top:350.3px;" width="7.6" height="6.8" viewBox="0 0 9 8"><ellipse cx="4.4" cy="4.9" rx="3.8" ry="2.5" fill="#5a4cc0"/><ellipse cx="4.4" cy="3.9" rx="3.9" ry="2.1" fill="#2a2a30"/><ellipse cx="4.2" cy="2.9" rx="3.1" ry="1.9" fill="#b4b8c0"/><ellipse cx="3.6" cy="2.2" rx="1.9" ry="1.5" fill="#48a830"/></svg>
<span class="t " style="left:1032px;top:346.6px;font-size:11.6px;line-height:13.9px;color:#3a3a3a;">Span</span>
<span class="t " style="left:1062.5px;top:346.7px;font-size:11.3px;line-height:13.6px;color:#3a3a3a;">200.0 MHz</span>
<div style="left:10px;top:87px;width:572px;height:285px;background:#63a9ec;border:1px solid #4a94e2;"></div>
<div style="left:10.5px;top:87.6px;width:570.5px;height:22.0px;background:linear-gradient(#4f97e0,#5ea6ea 55%,#6cb2f0);"></div>
<div style="left:16px;top:91.5px;width:14.5px;height:14.0px;background:#bdbdbd;border:1px solid #d0d0d0;"></div>
<svg style="left:16px;top:91.5px;" width="14.5" height="14" viewBox="0 0 14.5 14"><path d="M3 3.5 H6 M8 3.5 H12 M3 6 H5 M7 6 H12 M3 8.5 H6 M8 8.5 H11 M3 11 H5 M7 11 H12" stroke="#707070" stroke-width="1.2"/></svg>
<span class="t " style="left:34.5px;top:91.7px;font-size:12.2px;line-height:14.6px;font-weight:bold;color:#f4f8ff;text-shadow:0 0 1px #d8e8fa;">WLAN Summary</span>
<div style="left:541.5px;top:91.5px;width:15.5px;height:15.5px;border:1px solid #9ccaf6;border-radius:3px;background:linear-gradient(#7cb8f2,#5ea2e6);"></div>
<div style="left:545.5px;top:95px;width:8.0px;height:8.5px;border:1.5px solid #fff;border-top-width:3px;"></div>
<div style="left:561.5px;top:91.5px;width:15.5px;height:15.5px;border:1px solid #fad4ac;border-radius:3px;background:linear-gradient(#f6b078,#ee8c3c);"></div>
<svg style="left:561.5px;top:91.5px;" width="15.5" height="15.5" viewBox="0 0 15.5 15.5"><path d="M4 4 L11.5 11.5 M11.5 4 L4 11.5" stroke="#fff" stroke-width="2"/></svg>
<div style="left:13.7px;top:109.5px;width:564.3px;height:258.1px;background:#fefefe;"></div>
<span class="t " style="left:25.5px;top:140.3px;font-size:12.8px;line-height:15.4px;font-weight:bold;color:#222;">Standard:</span>
<span class="t " style="left:97.5px;top:140.9px;font-size:11.8px;line-height:14.2px;color:#333;">802.11ac</span>
<span class="t " style="left:246.5px;top:140.6px;font-size:12.4px;line-height:14.9px;font-weight:bold;color:#222;">Bandwidth:</span>
<span class="t " style="left:340.5px;top:140.9px;font-size:11.8px;line-height:14.2px;color:#333;">160 MHz</span>
<span class="t " style="left:457px;top:140.2px;font-size:13.0px;line-height:15.6px;font-weight:bold;color:#222;">Guard Interval:</span>
<div class="gb" style="left:26px;top:169.5px;width:376.5px;height:78.0px;"></div>
<span class="t " style="left:28px;top:172.1px;font-size:12.1px;line-height:14.5px;font-weight:bold;color:#222;">Burst Power:</span>
<span class="t " style="left:136.5px;top:172.3px;font-size:11.7px;line-height:14.0px;color:#333;">-19.07 dBm</span>
<span class="t " style="left:28px;top:190.6px;font-size:12.35px;line-height:14.8px;font-weight:bold;color:#222;">Burst Index:</span>
<span class="t " style="left:136.5px;top:191.0px;font-size:11.7px;line-height:14.0px;color:#333;">1</span>
<span class="t " style="left:28px;top:210.0px;font-size:11.7px;line-height:14.0px;font-weight:bold;color:#222;">Frequency Error:</span>
<span class="t " style="left:136.5px;top:210.0px;font-size:11.7px;line-height:14.0px;color:#333;">-1.437 kHz</span>
<span class="t " style="left:28px;top:228.9px;font-size:11.62px;line-height:13.9px;font-weight:bold;color:#222;">Symbol Clk Error:</span>
<span class="t " style="left:136.5px;top:228.8px;font-size:11.7px;line-height:14.0px;color:#333;">-0.281 ppm</span>
<span class="t " style="left:211.5px;top:171.9px;font-size:12.4px;line-height:14.9px;font-weight:bold;color:#222;">Peak-to-Average:</span>
<span class="t " style="left:338px;top:172.3px;font-size:11.7px;line-height:14.0px;color:#333;">12.55 dB</span>
<span class="t " style="left:211.5px;top:190.7px;font-size:12.2px;line-height:14.6px;font-weight:bold;color:#222;">IQ Origin Offset:</span>
<span class="t " style="left:338px;top:191.0px;font-size:11.7px;line-height:14.0px;color:#333;">-65.85 dB</span>
<span class="t " style="left:211.5px;top:209.8px;font-size:11.93px;line-height:14.3px;font-weight:bold;color:#222;">Common Pilot Error:</span>
<span class="t " style="left:338px;top:210.0px;font-size:11.7px;line-height:14.0px;color:#333;">0.395 %</span>
<div class="gb" style="left:418px;top:169.5px;width:148px;height:18.0px;"></div>
<span class="t " style="left:423px;top:171.4px;font-size:12.2px;line-height:14.6px;font-weight:bold;color:#222;">L-SIG Data</span>
<div class="gb" style="left:418px;top:187.5px;width:148px;height:63.0px;"></div>
<span class="t " style="left:434px;top:192.2px;font-size:12.2px;line-height:14.6px;font-weight:bold;color:#222;">Rate</span>
<span class="t " style="left:522.7px;top:191.7px;font-size:11.7px;line-height:14.0px;color:#333;">13</span>
<span class="t " style="left:434px;top:211.2px;font-size:12.2px;line-height:14.6px;font-weight:bold;color:#222;">Length</span>
<span class="t " style="left:522.7px;top:210.7px;font-size:11.7px;line-height:14.0px;color:#333;">312</span>
<span class="t " style="left:434px;top:230.0px;font-size:12.2px;line-height:14.6px;font-weight:bold;color:#222;">Tail</span>
<span class="t " style="left:522.7px;top:229.5px;font-size:11.7px;line-height:14.0px;color:#333;">0</span>
<div class="gb" style="left:26px;top:267px;width:376.5px;height:18px;"></div>
<span class="t " style="left:28px;top:268.2px;font-size:12.2px;line-height:14.6px;font-weight:bold;color:#222;">EVM</span>
<div class="gb" style="left:26px;top:285px;width:376.5px;height:75px;"></div>
<span class="t " style="left:128px;top:292.7px;font-size:12.2px;line-height:14.6px;font-weight:bold;color:#222;">All</span>
<span class="t " style="left:208px;top:292.7px;font-size:12.2px;line-height:14.6px;font-weight:bold;color:#222;">Pilots</span>
<span class="t " style="left:294.5px;top:292.7px;font-size:12.2px;line-height:14.6px;font-weight:bold;color:#222;">Data</span>
<span class="t " style="left:31.5px;top:315.2px;font-size:12.2px;line-height:14.6px;font-weight:bold;color:#222;">RMS</span>
<span class="t " style="left:31.5px;top:333.7px;font-size:12.2px;line-height:14.6px;font-weight:bold;color:#222;">Peak</span>
<span class="t " style="left:131px;top:315.5px;font-size:11.7px;line-height:14.0px;color:#333;">-36.04 dB</span>
<span class="t " style="left:131px;top:334.0px;font-size:11.7px;line-height:14.0px;color:#333;">-24.67 dB</span>
<span class="t " style="left:211px;top:315.5px;font-size:11.7px;line-height:14.0px;color:#333;">-36.80 dB</span>
<span class="t " style="left:211px;top:334.0px;font-size:11.7px;line-height:14.0px;color:#333;">-27.96 dB</span>
<span class="t " style="left:297.5px;top:315.5px;font-size:11.7px;line-height:14.0px;color:#333;">-36.01 dB</span>
<span class="t " style="left:297.5px;top:334.0px;font-size:11.7px;line-height:14.0px;color:#333;">-24.67 dB</span>
<div class="gb" style="left:418px;top:268.5px;width:148px;height:17.5px;"></div>
<span class="t " style="left:423px;top:270.7px;font-size:12.2px;line-height:14.6px;font-weight:bold;color:#222;">VHT-SIG A Data</span>
<div class="gb" style="left:418px;top:286px;width:148px;height:84px;"></div>
<span class="t " style="left:434px;top:293.0px;font-size:12.2px;line-height:14.6px;font-weight:bold;color:#222;">BW</span>
<span class="t " style="left:522.7px;top:292.5px;font-size:11.7px;line-height:14.0px;color:#333;">3</span>
<span class="t " style="left:434px;top:312.0px;font-size:12.2px;line-height:14.6px;font-weight:bold;color:#222;">STBC</span>
<span class="t " style="left:522.7px;top:311.5px;font-size:11.7px;line-height:14.0px;color:#333;">0</span>
<span class="t " style="left:434px;top:331.0px;font-size:12.2px;line-height:14.6px;font-weight:bold;color:#222;">Nsts</span>
<span class="t " style="left:522.7px;top:330.5px;font-size:11.7px;line-height:14.0px;color:#333;">0</span>
<span class="t " style="left:434px;top:349.0px;font-size:12.2px;line-height:14.6px;font-weight:bold;color:#222;">PARTIAL AID</span>
<span class="t " style="left:522.7px;top:349.3px;font-size:11.7px;line-height:14.0px;color:#333;">1</span>
<div style="left:13.7px;top:352.5px;width:564.3px;height:15.1px;background:#fefefe;"></div>
<div style="left:561.5px;top:139px;width:16.5px;height:213.5px;background:#fefefe;border-left:1px solid #b4d8f2;"></div>
<div style="left:13.7px;top:352.3px;width:548.3px;height:1.0px;background:#b4d8f2;"></div>
<div style="left:562.5px;top:140px;width:14.0px;height:15.5px;border:1px solid #58a8e0;border-radius:2.5px;background:linear-gradient(90deg,#fff,#f2f2f2 50%,#dcdcdc);box-shadow:0 0 0 1px #c0e0f6;"></div>
<svg style="left:565px;top:144px;" width="9" height="7" viewBox="0 0 9 7"><path d="M1.2 5.5 L4.5 2 L7.8 5.5" fill="none" stroke="#3c94d6" stroke-width="1.8"/></svg>
<div style="left:562.5px;top:157.5px;width:14.0px;height:67.0px;border:1px solid #58a8e0;border-radius:2.5px;background:linear-gradient(90deg,#fff,#f2f2f2 50%,#dcdcdc);box-shadow:0 0 0 1px #c0e0f6;"></div>
<div style="left:568px;top:187.5px;width:3.5px;height:5.0px;background:#58a8e0;"></div>
<div style="left:562.5px;top:336.5px;width:14.0px;height:15.0px;border:1px solid #58a8e0;border-radius:2.5px;background:linear-gradient(90deg,#fff,#f2f2f2 50%,#dcdcdc);box-shadow:0 0 0 1px #c0e0f6;"></div>
<svg style="left:565px;top:340.5px;" width="9" height="7" viewBox="0 0 9 7"><path d="M1.2 1.5 L4.5 5 L7.8 1.5" fill="none" stroke="#3c94d6" stroke-width="1.8"/></svg>
<div style="left:15px;top:353.5px;width:13.7px;height:13.3px;border:1px solid #58a8e0;border-radius:2.5px;background:linear-gradient(#fff,#f2f2f2 50%,#dcdcdc);box-shadow:0 0 0 1px #c0e0f6;"></div>
<svg style="left:18.5px;top:356px;" width="7" height="9" viewBox="0 0 7 9"><path d="M5.5 1.2 L2 4.5 L5.5 7.8" fill="none" stroke="#3c94d6" stroke-width="1.8"/></svg>
<div style="left:32px;top:353.5px;width:379.5px;height:13.3px;border:1px solid #58a8e0;border-radius:2.5px;background:linear-gradient(#fff,#f2f2f2 50%,#dcdcdc);box-shadow:0 0 0 1px #c0e0f6;"></div>
<div style="left:218.5px;top:358.5px;width:4.5px;height:4.5px;background:#58a8e0;"></div>
<div style="left:546.5px;top:353.5px;width:14.0px;height:13.3px;border:1px solid #58a8e0;border-radius:2.5px;background:linear-gradient(#fff,#f2f2f2 50%,#dcdcdc);box-shadow:0 0 0 1px #c0e0f6;"></div>
<svg style="left:550px;top:356px;" width="7" height="9" viewBox="0 0 7 9"><path d="M1.5 1.2 L5 4.5 L1.5 7.8" fill="none" stroke="#3c94d6" stroke-width="1.8"/></svg>
<div style="left:9px;top:372px;width:385.5px;height:283.5px;background:#c6c6c6;"></div>
<div class="wt" style="left:12.5px;top:373.5px;width:377.5px;height:20.0px;"></div>
<svg style="left:16px;top:376px" width="14" height="14" viewBox="0 0 14 14"><rect width="14" height="14" rx="1.5" fill="#101040"/><rect x="1" y="1" width="12" height="12" fill="#1028d8"/><rect x="3.6" y="1" width="6.8" height="12" fill="#28d040"/><rect x="5" y="1" width="4" height="12" fill="#f0a818"/><rect x="6" y="1" width="2" height="12" fill="#e83818"/></svg>
<span class="t " style="left:35px;top:376.2px;font-size:12.6px;line-height:15.1px;font-weight:bold;color:#ececec;text-shadow:0 0 1.5px #9a9a9a;">Spectrogram</span>
<div style="left:353px;top:375.0px;width:15.5px;height:16.0px;border:1px solid #d8d8d8;border-radius:3px;background:linear-gradient(#cdcdcd,#c2c2c2);"></div>
<div style="left:357px;top:379.0px;width:8px;height:8.0px;border:1.3px solid #dcdcdc;border-top-width:2.6px;border-radius:1px;"></div>
<div style="left:372.5px;top:375.0px;width:15.5px;height:16.0px;border:1px solid #d8d8d8;border-radius:3px;background:linear-gradient(#cdcdcd,#c2c2c2);"></div>
<svg style="left:372.5px;top:375.0px;" width="15.5" height="16" viewBox="0 0 15.5 16"><path d="M4 4 L11.5 12 M11.5 4 L4 12" stroke="#e0e0e0" stroke-width="1.9"/></svg>
<div style="left:9px;top:372px;width:4.5px;height:283.5px;background:linear-gradient(90deg,#8e8e8e,#a8a8a8 40%,#d0d0d0);"></div>
<div style="left:13.5px;top:393.5px;width:376.0px;height:258.5px;background:#fefefe;"></div>
<span class="t " style="left:104.5px;top:399.8px;font-size:11.6px;line-height:13.9px;color:#3a3a3a;">Overlap: 75 %</span>
<span class="t " style="left:263.5px;top:399.8px;font-size:11.6px;line-height:13.9px;color:#3a3a3a;">+Peak</span>
<div class="btn" style="left:349px;top:395.5px;width:37px;height:18.0px;"></div>
<span class="t " style="left:354.8px;top:397.7px;font-size:11.6px;line-height:13.9px;color:#3a3a3a;letter-spacing:-0.6px;">Clear</span>
<span class="t " style="left:28px;top:418.6px;font-size:11.6px;line-height:13.9px;color:#3a3a3a;">Time/div:</span>
<svg style="left:17px;top:431.8px;" width="7.6" height="6.8" viewBox="0 0 9 8"><ellipse cx="4.4" cy="4.9" rx="3.8" ry="2.5" fill="#5a4cc0"/><ellipse cx="4.4" cy="3.9" rx="3.9" ry="2.1" fill="#2a2a30"/><ellipse cx="4.2" cy="2.9" rx="3.1" ry="1.9" fill="#b4b8c0"/><ellipse cx="3.6" cy="2.2" rx="1.9" ry="1.5" fill="#48a830"/></svg>
<span class="t " style="left:30.7px;top:433.6px;font-size:11.6px;line-height:13.9px;color:#3a3a3a;">557 us</span>
<span class="t " style="left:27px;top:451.1px;font-size:11.6px;line-height:13.9px;color:#3a3a3a;">RBW:</span>
<svg style="left:17px;top:463.8px;" width="7.6" height="6.8" viewBox="0 0 9 8"><ellipse cx="4.4" cy="4.9" rx="3.8" ry="2.5" fill="#5a4cc0"/><ellipse cx="4.4" cy="3.9" rx="3.9" ry="2.1" fill="#2a2a30"/><ellipse cx="4.2" cy="2.9" rx="3.1" ry="1.9" fill="#b4b8c0"/><ellipse cx="3.6" cy="2.2" rx="1.9" ry="1.5" fill="#48a830"/></svg>
<span class="t " style="left:30.7px;top:466.1px;font-size:11.6px;line-height:13.9px;color:#3a3a3a;">50.0 kHz</span>
<div class="cb" style="left:19px;top:487px;width:11.5px;height:11.5px;"></div>
<span class="t " style="left:35px;top:485.4px;font-size:11.6px;line-height:13.9px;color:#3a3a3a;">VBW:</span>
<div class="cb" style="left:19px;top:527px;width:11.5px;height:11.5px;"></div>
<span class="t " style="left:35px;top:525.6px;font-size:11.6px;line-height:13.9px;color:#3a3a3a;">3-D</span>
<span class="t " style="left:27px;top:591.8px;font-size:11.6px;line-height:13.9px;color:#3a3a3a;">Pos</span>
<svg style="left:17px;top:604.3px;" width="7.6" height="6.8" viewBox="0 0 9 8"><ellipse cx="4.4" cy="4.9" rx="3.8" ry="2.5" fill="#5a4cc0"/><ellipse cx="4.4" cy="3.9" rx="3.9" ry="2.1" fill="#2a2a30"/><ellipse cx="4.2" cy="2.9" rx="3.1" ry="1.9" fill="#b4b8c0"/><ellipse cx="3.6" cy="2.2" rx="1.9" ry="1.5" fill="#48a830"/></svg>
<span class="t " style="left:30.7px;top:606.8px;font-size:11.6px;line-height:13.9px;color:#3a3a3a;">8.2 div</span>
<div class="btn" style="left:18px;top:630px;width:67.5px;height:18.7px;"></div>
<span class="t " style="left:26.5px;top:632.5px;font-size:11.6px;line-height:13.9px;color:#3a3a3a;">Autoscale</span>
<svg style="left:145.5px;top:636.3px;" width="7.6" height="6.8" viewBox="0 0 9 8"><ellipse cx="4.4" cy="4.9" rx="3.8" ry="2.5" fill="#5a4cc0"/><ellipse cx="4.4" cy="3.9" rx="3.9" ry="2.1" fill="#2a2a30"/><ellipse cx="4.2" cy="2.9" rx="3.1" ry="1.9" fill="#b4b8c0"/><ellipse cx="3.6" cy="2.2" rx="1.9" ry="1.5" fill="#48a830"/></svg>
<span class="t " style="left:160px;top:632.5px;font-size:11.6px;line-height:13.9px;color:#3a3a3a;">ZCF</span>
<span class="t " style="left:185.5px;top:632.8px;font-size:11.15px;line-height:13.4px;color:#3a3a3a;">5.2470 GHz</span>
<svg style="left:263.5px;top:636.3px;" width="7.6" height="6.8" viewBox="0 0 9 8"><ellipse cx="4.4" cy="4.9" rx="3.8" ry="2.5" fill="#5a4cc0"/><ellipse cx="4.4" cy="3.9" rx="3.9" ry="2.1" fill="#2a2a30"/><ellipse cx="4.2" cy="2.9" rx="3.1" ry="1.9" fill="#b4b8c0"/><ellipse cx="3.6" cy="2.2" rx="1.9" ry="1.5" fill="#48a830"/></svg>
<span class="t " style="left:277.6px;top:633.1px;font-size:10.6px;line-height:12.7px;color:#3a3a3a;">ZSpan</span>
<span class="t " style="left:315.5px;top:632.9px;font-size:11.1px;line-height:13.3px;color:#3a3a3a;">173.9 MHz</span>
<div style="left:127.5px;top:419px;width:15.5px;height:207px;background:#ececec;"></div>
<div style="left:369.5px;top:419px;width:16.5px;height:207px;background:#f4f4f4;"></div>
<div style="left:370.5px;top:526px;width:14.5px;height:29px;background:#cbcbcb;"></div>
<svg style="left:0;top:0" width="400" height="660" viewBox="0 0 400 660"><defs><filter id="sgn" x="0" y="0" width="100%" height="100%" color-interpolation-filters="sRGB"><feTurbulence type="fractalNoise" baseFrequency="0.42" numOctaves="2" seed="4"/><feColorMatrix type="matrix" values="0.25 0 0 0 0.78  0 0.95 0 0 -0.145  0 0 0 0 0.05  0 0 0 0 1"/></filter><linearGradient id="lb" x1="0" x2="1" y1="0" y2="0"><stop offset="0" stop-color="#0a30d8"/><stop offset="0.72" stop-color="#0c68f0"/><stop offset="0.9" stop-color="#10c8e8"/><stop offset="1" stop-color="#30e090"/></linearGradient><linearGradient id="rb" x1="0" x2="1" y1="0" y2="0"><stop offset="0" stop-color="#f0a020"/><stop offset="0.2" stop-color="#30e0a0"/><stop offset="0.5" stop-color="#10b8f0"/><stop offset="1" stop-color="#0a40e0"/></linearGradient></defs><rect x="142" y="418.5" width="220.60000000000002" height="208.0" fill="#000"/><rect x="143" y="419.5" width="218.60000000000002" height="206.5" fill="#ea5812"/><rect x="143" y="419.5" width="218.60000000000002" height="206.5" filter="url(#sgn)"/><rect x="179.8" y="419.5" width="2.4" height="206.5" fill="#f8b020" opacity="0.33"/><rect x="204.8" y="419.5" width="2.4" height="206.5" fill="#f8b020" opacity="0.33"/><rect x="229.8" y="419.5" width="2.4" height="206.5" fill="#f8b020" opacity="0.33"/><rect x="279.3" y="419.5" width="2.4" height="206.5" fill="#f8b020" opacity="0.33"/><rect x="304.3" y="419.5" width="2.4" height="206.5" fill="#f8b020" opacity="0.33"/><rect x="328.8" y="419.5" width="2.4" height="206.5" fill="#f8b020" opacity="0.33"/><rect x="143" y="419.5" width="15.5" height="206.5" fill="url(#lb)"/><rect x="143" y="419.5" width="12.5" height="2.5" fill="#0838d8" opacity="0.8"/><rect x="143" y="423.5" width="11" height="1.5" fill="#18c0f0" opacity="0.8"/><rect x="143" y="426.5" width="9" height="1.5" fill="#0a28c8" opacity="0.8"/><rect x="143" y="428.5" width="13" height="3.5" fill="#0a28c8" opacity="0.8"/><rect x="143" y="433.5" width="11" height="1.5" fill="#0c50e8" opacity="0.8"/><rect x="143" y="435.0" width="12.5" height="2" fill="#18c0f0" opacity="0.8"/><rect x="143" y="437.0" width="9" height="3.5" fill="#0a28c8" opacity="0.8"/><rect x="143" y="440.5" width="11" height="3.5" fill="#0a28c8" opacity="0.8"/><rect x="143" y="444.0" width="11" height="1.5" fill="#0a28c8" opacity="0.8"/><rect x="143" y="445.5" width="12.5" height="2" fill="#10a8f0" opacity="0.8"/><rect x="143" y="447.5" width="11" height="2" fill="#0a28c8" opacity="0.8"/><rect x="143" y="450.0" width="12.5" height="2.5" fill="#0820b0" opacity="0.8"/><rect x="143" y="453.0" width="12.5" height="2" fill="#0a28c8" opacity="0.8"/><rect x="143" y="455.0" width="9" height="2.5" fill="#10a8f0" opacity="0.8"/><rect x="143" y="459.0" width="12.5" height="2.5" fill="#0820b0" opacity="0.8"/><rect x="143" y="462.0" width="12.5" height="2.5" fill="#18c0f0" opacity="0.8"/><rect x="143" y="464.5" width="11" height="3.5" fill="#18c0f0" opacity="0.8"/><rect x="143" y="468.0" width="12.5" height="2.5" fill="#0820b0" opacity="0.8"/><rect x="143" y="471.0" width="13" height="1.5" fill="#0c50e8" opacity="0.8"/><rect x="143" y="473.0" width="9" height="3.5" fill="#0c50e8" opacity="0.8"/><rect x="143" y="477.0" width="11" height="1.5" fill="#0838d8" opacity="0.8"/><rect x="143" y="480.0" width="11" height="2" fill="#0820b0" opacity="0.8"/><rect x="143" y="482.5" width="12.5" height="2.5" fill="#0c50e8" opacity="0.8"/><rect x="143" y="486.5" width="9" height="2.5" fill="#18c0f0" opacity="0.8"/><rect x="143" y="490.5" width="9" height="2.5" fill="#10a8f0" opacity="0.8"/><rect x="143" y="493.5" width="12.5" height="1.5" fill="#0a28c8" opacity="0.8"/><rect x="143" y="496.5" width="12.5" height="2.5" fill="#0a28c8" opacity="0.8"/><rect x="143" y="499.5" width="12.5" height="1.5" fill="#10a8f0" opacity="0.8"/><rect x="143" y="501.5" width="11" height="2" fill="#0820b0" opacity="0.8"/><rect x="143" y="505.0" width="11" height="2.5" fill="#18c0f0" opacity="0.8"/><rect x="143" y="509.0" width="13" height="1.5" fill="#0820b0" opacity="0.8"/><rect x="143" y="510.5" width="12.5" height="2" fill="#0838d8" opacity="0.8"/><rect x="143" y="513.0" width="13" height="3.5" fill="#0838d8" opacity="0.8"/><rect x="143" y="516.5" width="9" height="1.5" fill="#0838d8" opacity="0.8"/><rect x="143" y="518.5" width="11" height="2.5" fill="#0a28c8" opacity="0.8"/><rect x="143" y="522.5" width="13" height="2" fill="#0838d8" opacity="0.8"/><rect x="143" y="524.5" width="12.5" height="2" fill="#18c0f0" opacity="0.8"/><rect x="143" y="526.5" width="12.5" height="1.5" fill="#18c0f0" opacity="0.8"/><rect x="143" y="528.0" width="11" height="3.5" fill="#0c50e8" opacity="0.8"/><rect x="143" y="533.0" width="12.5" height="3.5" fill="#18c0f0" opacity="0.8"/><rect x="143" y="537.0" width="13" height="2.5" fill="#10a8f0" opacity="0.8"/><rect x="143" y="540.0" width="13" height="2" fill="#0820b0" opacity="0.8"/><rect x="143" y="543.5" width="13" height="2" fill="#0838d8" opacity="0.8"/><rect x="143" y="546.0" width="13" height="2" fill="#0820b0" opacity="0.8"/><rect x="143" y="548.5" width="12.5" height="2.5" fill="#0820b0" opacity="0.8"/><rect x="143" y="552.5" width="12.5" height="1.5" fill="#10a8f0" opacity="0.8"/><rect x="143" y="555.5" width="12.5" height="2.5" fill="#18c0f0" opacity="0.8"/><rect x="143" y="559.5" width="11" height="2.5" fill="#10a8f0" opacity="0.8"/><rect x="143" y="563.5" width="12.5" height="1.5" fill="#18c0f0" opacity="0.8"/><rect x="143" y="565.5" width="12.5" height="2.5" fill="#18c0f0" opacity="0.8"/><rect x="143" y="569.5" width="12.5" height="2.5" fill="#10a8f0" opacity="0.8"/><rect x="143" y="573.5" width="13" height="2.5" fill="#0838d8" opacity="0.8"/><rect x="143" y="576.5" width="13" height="2" fill="#0838d8" opacity="0.8"/><rect x="143" y="579.0" width="11" height="2.5" fill="#0c50e8" opacity="0.8"/><rect x="143" y="583.0" width="12.5" height="2" fill="#0a28c8" opacity="0.8"/><rect x="143" y="585.5" width="9" height="2.5" fill="#0838d8" opacity="0.8"/><rect x="143" y="589.5" width="13" height="3.5" fill="#0a28c8" opacity="0.8"/><rect x="143" y="593.5" width="9" height="2.5" fill="#0838d8" opacity="0.8"/><rect x="143" y="596.0" width="13" height="2" fill="#0c50e8" opacity="0.8"/><rect x="143" y="599.5" width="11" height="2" fill="#0a28c8" opacity="0.8"/><rect x="143" y="603.0" width="11" height="1.5" fill="#18c0f0" opacity="0.8"/><rect x="143" y="604.5" width="9" height="1.5" fill="#0a28c8" opacity="0.8"/><rect x="143" y="606.5" width="11" height="2" fill="#18c0f0" opacity="0.8"/><rect x="143" y="610.0" width="13" height="1.5" fill="#18c0f0" opacity="0.8"/><rect x="143" y="612.0" width="9" height="3.5" fill="#0838d8" opacity="0.8"/><rect x="143" y="617.0" width="12.5" height="2" fill="#0a28c8" opacity="0.8"/><rect x="143" y="619.0" width="12.5" height="2.5" fill="#18c0f0" opacity="0.8"/><rect x="143" y="622.0" width="12.5" height="1.5" fill="#0838d8" opacity="0.8"/><rect x="143" y="623.5" width="12.5" height="2.5" fill="#0820b0" opacity="0.8"/><rect x="352" y="419.5" width="9.6" height="206.5" fill="url(#rb)"/><rect x="357.3" y="419.5" width="4.3" height="3" fill="#10a8f0" opacity="0.7"/><rect x="357.3" y="425.0" width="4.3" height="2" fill="#10a8f0" opacity="0.7"/><rect x="357.3" y="427.5" width="4.3" height="2" fill="#10a8f0" opacity="0.7"/><rect x="357.3" y="432.0" width="4.3" height="3" fill="#0c50e8" opacity="0.7"/><rect x="357.3" y="436.5" width="4.3" height="2" fill="#0828c0" opacity="0.7"/><rect x="357.3" y="439.0" width="4.3" height="3" fill="#10a8f0" opacity="0.7"/><rect x="357.3" y="444.5" width="4.3" height="2" fill="#0828c0" opacity="0.7"/><rect x="357.3" y="447.0" width="4.3" height="3" fill="#0828c0" opacity="0.7"/><rect x="357.3" y="451.5" width="4.3" height="3" fill="#0828c0" opacity="0.7"/><rect x="357.3" y="456.0" width="4.3" height="1.5" fill="#10a8f0" opacity="0.7"/><rect x="357.3" y="460.0" width="4.3" height="3" fill="#0c50e8" opacity="0.7"/><rect x="357.3" y="463.5" width="4.3" height="2" fill="#0c50e8" opacity="0.7"/><rect x="357.3" y="468.0" width="4.3" height="2" fill="#10a8f0" opacity="0.7"/><rect x="357.3" y="471.5" width="4.3" height="1.5" fill="#10a8f0" opacity="0.7"/><rect x="357.3" y="474.5" width="4.3" height="2" fill="#0c50e8" opacity="0.7"/><rect x="357.3" y="478.0" width="4.3" height="2" fill="#0828c0" opacity="0.7"/><rect x="357.3" y="482.5" width="4.3" height="3" fill="#10a8f0" opacity="0.7"/><rect x="357.3" y="488.0" width="4.3" height="2" fill="#10a8f0" opacity="0.7"/><rect x="357.3" y="491.5" width="4.3" height="2" fill="#0828c0" opacity="0.7"/><rect x="357.3" y="495.0" width="4.3" height="2" fill="#10a8f0" opacity="0.7"/><rect x="357.3" y="498.5" width="4.3" height="1.5" fill="#10a8f0" opacity="0.7"/><rect x="357.3" y="500.5" width="4.3" height="1.5" fill="#0c50e8" opacity="0.7"/><rect x="357.3" y="504.5" width="4.3" height="2" fill="#0828c0" opacity="0.7"/><rect x="357.3" y="508.0" width="4.3" height="1.5" fill="#0828c0" opacity="0.7"/><rect x="357.3" y="511.0" width="4.3" height="1.5" fill="#10a8f0" opacity="0.7"/><rect x="357.3" y="515.0" width="4.3" height="3" fill="#10a8f0" opacity="0.7"/><rect x="357.3" y="518.5" width="4.3" height="2" fill="#0828c0" opacity="0.7"/><rect x="357.3" y="521.0" width="4.3" height="2" fill="#10a8f0" opacity="0.7"/><rect x="357.3" y="523.5" width="4.3" height="3" fill="#10a8f0" opacity="0.7"/><rect x="357.3" y="528.0" width="4.3" height="2" fill="#0c50e8" opacity="0.7"/><rect x="357.3" y="531.5" width="4.3" height="3" fill="#0c50e8" opacity="0.7"/><rect x="357.3" y="537.0" width="4.3" height="3" fill="#0828c0" opacity="0.7"/><rect x="357.3" y="540.5" width="4.3" height="1.5" fill="#10a8f0" opacity="0.7"/><rect x="357.3" y="543.5" width="4.3" height="3" fill="#0c50e8" opacity="0.7"/><rect x="357.3" y="548.0" width="4.3" height="3" fill="#10a8f0" opacity="0.7"/><rect x="357.3" y="553.5" width="4.3" height="3" fill="#0828c0" opacity="0.7"/><rect x="357.3" y="558.0" width="4.3" height="2" fill="#10a8f0" opacity="0.7"/><rect x="357.3" y="562.5" width="4.3" height="3" fill="#0c50e8" opacity="0.7"/><rect x="357.3" y="566.0" width="4.3" height="1.5" fill="#0828c0" opacity="0.7"/><rect x="357.3" y="569.0" width="4.3" height="3" fill="#10a8f0" opacity="0.7"/><rect x="357.3" y="574.5" width="4.3" height="1.5" fill="#0c50e8" opacity="0.7"/><rect x="357.3" y="578.5" width="4.3" height="1.5" fill="#0828c0" opacity="0.7"/><rect x="357.3" y="581.5" width="4.3" height="2" fill="#0c50e8" opacity="0.7"/><rect x="357.3" y="586.0" width="4.3" height="3" fill="#0c50e8" opacity="0.7"/><rect x="357.3" y="591.5" width="4.3" height="3" fill="#10a8f0" opacity="0.7"/><rect x="357.3" y="596.0" width="4.3" height="2" fill="#10a8f0" opacity="0.7"/><rect x="357.3" y="600.5" width="4.3" height="3" fill="#0828c0" opacity="0.7"/><rect x="357.3" y="605.0" width="4.3" height="2" fill="#0828c0" opacity="0.7"/><rect x="357.3" y="608.5" width="4.3" height="1.5" fill="#0c50e8" opacity="0.7"/><rect x="357.3" y="611.5" width="4.3" height="3" fill="#10a8f0" opacity="0.7"/><rect x="357.3" y="617.0" width="4.3" height="2" fill="#10a8f0" opacity="0.7"/><rect x="357.3" y="619.5" width="4.3" height="1.5" fill="#10a8f0" opacity="0.7"/><rect x="357.3" y="623.5" width="4.3" height="3" fill="#10a8f0" opacity="0.7"/><rect x="255" y="419.5" width="2.3" height="206.5" fill="#28d09c" opacity="0.88"/><path d="M158 422.5 H353" stroke="#8a2800" stroke-width="1.1" stroke-dasharray="5 3" opacity="0.55"/><rect x="179.4" y="420.9" width="3.4" height="3.2" fill="#30e070"/><rect x="204.4" y="420.9" width="3.4" height="3.2" fill="#30e070"/><rect x="229.4" y="420.9" width="3.4" height="3.2" fill="#30e070"/><rect x="278.9" y="420.9" width="3.4" height="3.2" fill="#30e070"/><rect x="303.9" y="420.9" width="3.4" height="3.2" fill="#30e070"/><rect x="328.4" y="420.9" width="3.4" height="3.2" fill="#30e070"/><path d="M158 459.3 H353" stroke="#8a2800" stroke-width="1.1" stroke-dasharray="5 3" opacity="0.55"/><rect x="179.4" y="457.7" width="3.4" height="3.2" fill="#30e070"/><rect x="204.4" y="457.7" width="3.4" height="3.2" fill="#30e070"/><rect x="229.4" y="457.7" width="3.4" height="3.2" fill="#30e070"/><rect x="278.9" y="457.7" width="3.4" height="3.2" fill="#30e070"/><rect x="303.9" y="457.7" width="3.4" height="3.2" fill="#30e070"/><rect x="328.4" y="457.7" width="3.4" height="3.2" fill="#30e070"/><path d="M158 496 H353" stroke="#8a2800" stroke-width="1.1" stroke-dasharray="5 3" opacity="0.55"/><rect x="179.4" y="494.4" width="3.4" height="3.2" fill="#30e070"/><rect x="204.4" y="494.4" width="3.4" height="3.2" fill="#30e070"/><rect x="229.4" y="494.4" width="3.4" height="3.2" fill="#30e070"/><rect x="278.9" y="494.4" width="3.4" height="3.2" fill="#30e070"/><rect x="303.9" y="494.4" width="3.4" height="3.2" fill="#30e070"/><rect x="328.4" y="494.4" width="3.4" height="3.2" fill="#30e070"/><path d="M158 570 H353" stroke="#8a2800" stroke-width="1.1" stroke-dasharray="5 3" opacity="0.55"/><rect x="179.4" y="568.4" width="3.4" height="3.2" fill="#30e070"/><rect x="204.4" y="568.4" width="3.4" height="3.2" fill="#30e070"/><rect x="229.4" y="568.4" width="3.4" height="3.2" fill="#30e070"/><rect x="278.9" y="568.4" width="3.4" height="3.2" fill="#30e070"/><rect x="303.9" y="568.4" width="3.4" height="3.2" fill="#30e070"/><rect x="328.4" y="568.4" width="3.4" height="3.2" fill="#30e070"/><path d="M158 607 H353" stroke="#8a2800" stroke-width="1.1" stroke-dasharray="5 3" opacity="0.55"/><rect x="179.4" y="605.4" width="3.4" height="3.2" fill="#30e070"/><rect x="204.4" y="605.4" width="3.4" height="3.2" fill="#30e070"/><rect x="229.4" y="605.4" width="3.4" height="3.2" fill="#30e070"/><rect x="278.9" y="605.4" width="3.4" height="3.2" fill="#30e070"/><rect x="303.9" y="605.4" width="3.4" height="3.2" fill="#30e070"/><rect x="328.4" y="605.4" width="3.4" height="3.2" fill="#30e070"/><rect x="152.5" y="429.5" width="117.5" height="45.5" fill="#301400" opacity="0.72"/><rect x="221" y="429.5" width="117" height="80.5" fill="#301400" opacity="0.72"/><path d="M143 532.3 H369" stroke="#c8c0d8" stroke-width="1.3"/><path d="M158 532.3 H352" stroke="#9890e0" stroke-width="1.3" stroke-dasharray="7 4" opacity="0.8"/><rect x="148.7" y="508.5" width="18.3" height="11.2" fill="#000"/><rect x="337" y="508.7" width="16.7" height="10.8" fill="#301400" opacity="0.85"/><path d="M155.7 521 L161.5 526.8 L155.7 532.6 L149.9 526.8 Z" fill="#10b8c8" stroke="#fff" stroke-width="1.6"/><path d="M344.5 520.5 L350.8 526.8 L344.5 533.1 L338.2 526.8 Z" fill="#fff"/><path d="M139.5 436 H143" stroke="#222" stroke-width="1.2"/><path d="M139.5 483.5 H143" stroke="#222" stroke-width="1.2"/><path d="M139.5 530.5 H143" stroke="#222" stroke-width="1.2"/><path d="M139.5 577.5 H143" stroke="#222" stroke-width="1.2"/><path d="M362 422 H369" stroke="#888" stroke-width="1.1"/><path d="M362 459 H369" stroke="#888" stroke-width="1.1"/><path d="M362 495.7 H369" stroke="#888" stroke-width="1.1"/><path d="M362 570 H369" stroke="#888" stroke-width="1.1"/><path d="M362 607 H369" stroke="#888" stroke-width="1.1"/><path d="M253.2 618.5 L256.2 624.5 L259.2 618.5" fill="none" stroke="#f0e8d0" stroke-width="1.2"/><path d="M128.5 428.5 L135 421 L141.5 428.5 Z" fill="#2a8cf0"/><path d="M128.5 617.5 H141.5 L135 625 Z" fill="#2a8cf0"/><path d="M132 613.8 H138 M135 613.8 V623.5 M133 623.8 H137" stroke="#d02020" stroke-width="1.3" fill="none"/><path d="M374 429.5 L377.7 425.5 L381.4 429.5" fill="none" stroke="#444" stroke-width="1.3"/><path d="M374 615 L377.7 619 L381.4 615" fill="none" stroke="#444" stroke-width="1.3"/></svg>
<span class="t " style="left:153.7px;top:428.2px;font-size:10.0px;line-height:12.0px;color:#e4e0d8;">MR: +79.39 dBm</span>
<span class="t " style="left:153.7px;top:439.6px;font-size:10.0px;line-height:12.0px;color:#e4e0d8;">5.17075 GHz</span>
<span class="t " style="left:153.7px;top:450.9px;font-size:10.0px;line-height:12.0px;color:#e4e0d8;">-56.000 s</span>
<span class="t " style="left:153.7px;top:462.2px;font-size:10.0px;line-height:12.0px;color:#e4e0d8;">2/6/2013 4:56:1</span>
<span class="t " style="left:222px;top:428.2px;font-size:10.0px;line-height:12.0px;color:#e4e0d8;">M1: -65.03 dBm</span>
<span class="t " style="left:222px;top:439.6px;font-size:10.0px;line-height:12.0px;color:#e4e0d8;">5.31975 GHz</span>
<span class="t " style="left:222px;top:451.1px;font-size:10.0px;line-height:12.0px;color:#e4e0d8;">-56.000 s</span>
<span class="t " style="left:222px;top:462.5px;font-size:10.0px;line-height:12.0px;color:#e4e0d8;">2/6/2013 4:56:15.000110</span>
<span class="t " style="left:222px;top:474.0px;font-size:10.0px;line-height:12.0px;color:#e4e0d8;">ΔM1: 14.36 dB</span>
<span class="t " style="left:222px;top:485.4px;font-size:10.0px;line-height:12.0px;color:#e4e0d8;">149 MHz</span>
<span class="t " style="left:222px;top:496.9px;font-size:10.0px;line-height:12.0px;color:#e4e0d8;">0.000 s</span>
<span class="t " style="left:150.5px;top:508.3px;font-size:9.8px;line-height:11.8px;color:#fff;">MR</span>
<span class="t " style="left:339px;top:508.3px;font-size:9.8px;line-height:11.8px;color:#fff;">M1</span>
<div style="left:391px;top:372px;width:382px;height:283.5px;background:#c6c6c6;"></div>
<div style="left:389.5px;top:372px;width:6.5px;height:283.5px;background:linear-gradient(90deg,#ececec,#d4d4d4 25%,#a8a8a8 50%,#c4c4c4 70%,#e4e4e4);"></div>
<div class="wt" style="left:394px;top:373.5px;width:376px;height:20.0px;"></div>
<svg style="left:398px;top:376px" width="14" height="14" viewBox="0 0 14 14"><rect width="14" height="14" rx="1.5" fill="#0c0c0c"/><path d="M2 3.5 H12 M2 7 H12 M2 10.5 H12" stroke="#18b0b0" stroke-width="1.6" stroke-dasharray="1.6 1.2"/><path d="M3 7 H5" stroke="#e8d020" stroke-width="1.6"/></svg>
<span class="t " style="left:416px;top:376.4px;font-size:12.35px;line-height:14.8px;font-weight:bold;color:#ececec;text-shadow:0 0 1.5px #9a9a9a;">WLAN Constellation</span>
<div style="left:733px;top:375.0px;width:15.5px;height:16.0px;border:1px solid #d8d8d8;border-radius:3px;background:linear-gradient(#cdcdcd,#c2c2c2);"></div>
<div style="left:737px;top:379.0px;width:8px;height:8.0px;border:1.3px solid #dcdcdc;border-top-width:2.6px;border-radius:1px;"></div>
<div style="left:752.5px;top:375.0px;width:15.5px;height:16.0px;border:1px solid #d8d8d8;border-radius:3px;background:linear-gradient(#cdcdcd,#c2c2c2);"></div>
<svg style="left:752.5px;top:375.0px;" width="15.5" height="16" viewBox="0 0 15.5 16"><path d="M4 4 L11.5 12 M11.5 4 L4 12" stroke="#e0e0e0" stroke-width="1.9"/></svg>
<div style="left:396px;top:393.5px;width:372.5px;height:258.5px;background:#fefefe;"></div>
<div class="gb" style="left:406px;top:431.7px;width:164px;height:111.3px;"></div>
<span class="t " style="left:407.3px;top:433.6px;font-size:11.6px;line-height:13.9px;color:#3a3a3a;">Marker:</span>
<span class="t " style="left:475.5px;top:433.6px;font-size:11.6px;line-height:13.9px;color:#3a3a3a;">M1</span>
<span class="t " style="left:407.3px;top:448.6px;font-size:11.6px;line-height:13.9px;color:#3a3a3a;">Symbols:</span>
<span class="t " style="left:475.5px;top:448.6px;font-size:11.6px;line-height:13.9px;color:#3a3a3a;">99</span>
<span class="t " style="left:407.3px;top:463.7px;font-size:11.6px;line-height:13.9px;color:#3a3a3a;">Subcarrier:</span>
<span class="t " style="left:475.5px;top:463.7px;font-size:11.6px;line-height:13.9px;color:#3a3a3a;">223</span>
<span class="t " style="left:407.3px;top:478.7px;font-size:11.6px;line-height:13.9px;color:#3a3a3a;">Type:</span>
<span class="t " style="left:475.5px;top:478.7px;font-size:11.6px;line-height:13.9px;color:#3a3a3a;">Data</span>
<span class="t " style="left:407.3px;top:493.8px;font-size:11.6px;line-height:13.9px;color:#3a3a3a;">Value:</span>
<span class="t " style="left:475.5px;top:493.8px;font-size:11.6px;line-height:13.9px;color:#3a3a3a;">06</span>
<span class="t " style="left:407.3px;top:508.8px;font-size:11.6px;line-height:13.9px;color:#3a3a3a;">Magnitude:</span>
<span class="t " style="left:475.5px;top:508.8px;font-size:11.6px;line-height:13.9px;color:#3a3a3a;">1.259</span>
<span class="t " style="left:407.3px;top:523.8px;font-size:11.6px;line-height:13.9px;color:#3a3a3a;">Phase:</span>
<span class="t " style="left:475.5px;top:523.8px;font-size:11.6px;line-height:13.9px;color:#3a3a3a;">-155.6 °</span>
<svg style="left:0;top:0" width="780" height="660" viewBox="0 0 780 660"><rect x="582.5" y="400.5" width="173.5" height="173.5" fill="#000"/><path d="M603.0 416.0 V560.6 M598.0 421.0 H742.3 M612.0 416.0 V560.6 M598.0 430.0 H742.3 M620.9 416.0 V560.6 M598.0 438.9 H742.3 M629.9 416.0 V560.6 M598.0 447.9 H742.3 M638.8 416.0 V560.6 M598.0 456.9 H742.3 M647.8 416.0 V560.6 M598.0 465.9 H742.3 M656.7 416.0 V560.6 M598.0 474.8 H742.3 M665.7 416.0 V560.6 M598.0 483.8 H742.3 M674.6 416.0 V560.6 M598.0 492.8 H742.3 M683.6 416.0 V560.6 M598.0 501.8 H742.3 M692.5 416.0 V560.6 M598.0 510.7 H742.3 M701.5 416.0 V560.6 M598.0 519.7 H742.3 M710.4 416.0 V560.6 M598.0 528.7 H742.3 M719.4 416.0 V560.6 M598.0 537.7 H742.3 M728.3 416.0 V560.6 M598.0 546.6 H742.3 M737.3 416.0 V560.6 M598.0 555.6 H742.3 " stroke="#5a4c3c" stroke-width="0.7" fill="none"/><g fill="#1080f0"><circle cx="603.0" cy="420.9" r="3.3"/><circle cx="603.4" cy="429.5" r="3.5"/><circle cx="603.4" cy="438.5" r="3.5"/><circle cx="603.1" cy="447.5" r="3.4"/><circle cx="603.2" cy="456.8" r="3.6"/><circle cx="602.7" cy="465.6" r="3.3"/><circle cx="603.0" cy="475.3" r="3.6"/><circle cx="603.3" cy="483.7" r="3.6"/><circle cx="602.6" cy="492.6" r="3.6"/><circle cx="603.2" cy="501.7" r="3.3"/><circle cx="602.8" cy="510.4" r="3.4"/><circle cx="603.3" cy="519.4" r="3.7"/><circle cx="603.4" cy="528.2" r="3.4"/><circle cx="603.0" cy="537.2" r="3.5"/><circle cx="603.4" cy="546.2" r="3.6"/><circle cx="602.6" cy="555.7" r="3.7"/><circle cx="611.7" cy="420.5" r="3.3"/><circle cx="612.0" cy="429.5" r="3.3"/><circle cx="612.0" cy="439.4" r="3.5"/><circle cx="611.9" cy="448.1" r="3.3"/><circle cx="612.0" cy="456.6" r="3.6"/><circle cx="612.4" cy="465.4" r="3.5"/><circle cx="612.1" cy="474.5" r="3.4"/><circle cx="612.4" cy="484.3" r="3.3"/><circle cx="612.2" cy="493.2" r="3.3"/><circle cx="612.1" cy="501.3" r="3.4"/><circle cx="612.1" cy="510.8" r="3.7"/><circle cx="611.5" cy="519.6" r="3.7"/><circle cx="612.0" cy="528.6" r="3.4"/><circle cx="612.4" cy="537.7" r="3.2"/><circle cx="612.3" cy="546.5" r="3.5"/><circle cx="611.7" cy="555.5" r="3.4"/><circle cx="620.5" cy="421.1" r="3.3"/><circle cx="621.2" cy="429.5" r="3.7"/><circle cx="621.2" cy="438.9" r="3.6"/><circle cx="620.7" cy="448.2" r="3.5"/><circle cx="620.6" cy="457.4" r="3.4"/><circle cx="620.8" cy="466.2" r="3.4"/><circle cx="621.1" cy="474.5" r="3.7"/><circle cx="620.7" cy="483.4" r="3.8"/><circle cx="620.6" cy="493.2" r="3.8"/><circle cx="621.0" cy="501.3" r="3.2"/><circle cx="620.6" cy="510.6" r="3.6"/><circle cx="621.4" cy="519.6" r="3.3"/><circle cx="621.0" cy="528.3" r="3.3"/><circle cx="621.0" cy="537.8" r="3.2"/><circle cx="620.9" cy="546.8" r="3.7"/><circle cx="620.8" cy="556.0" r="3.3"/><circle cx="630.1" cy="421.3" r="3.7"/><circle cx="629.9" cy="429.6" r="3.2"/><circle cx="629.9" cy="438.6" r="3.6"/><circle cx="629.4" cy="448.2" r="3.3"/><circle cx="629.4" cy="456.6" r="3.5"/><circle cx="629.9" cy="465.8" r="3.3"/><circle cx="629.8" cy="475.3" r="3.5"/><circle cx="630.3" cy="483.3" r="3.8"/><circle cx="630.2" cy="492.8" r="3.5"/><circle cx="629.9" cy="502.2" r="3.2"/><circle cx="630.0" cy="510.8" r="3.4"/><circle cx="630.1" cy="519.9" r="3.3"/><circle cx="630.1" cy="528.6" r="3.5"/><circle cx="630.0" cy="537.2" r="3.6"/><circle cx="629.7" cy="547.0" r="3.3"/><circle cx="630.2" cy="555.8" r="3.6"/><circle cx="639.2" cy="420.5" r="3.6"/><circle cx="638.9" cy="430.2" r="3.4"/><circle cx="638.4" cy="438.6" r="3.6"/><circle cx="638.5" cy="447.5" r="3.4"/><circle cx="638.8" cy="456.9" r="3.2"/><circle cx="639.1" cy="465.7" r="3.7"/><circle cx="638.3" cy="475.3" r="3.6"/><circle cx="639.3" cy="484.3" r="3.7"/><circle cx="638.4" cy="492.6" r="3.3"/><circle cx="639.1" cy="501.5" r="3.3"/><circle cx="638.4" cy="510.4" r="3.8"/><circle cx="639.3" cy="519.6" r="3.6"/><circle cx="638.8" cy="528.7" r="3.4"/><circle cx="638.9" cy="537.4" r="3.4"/><circle cx="638.8" cy="546.3" r="3.5"/><circle cx="639.3" cy="555.1" r="3.3"/><circle cx="648.1" cy="420.6" r="3.4"/><circle cx="648.1" cy="430.1" r="3.3"/><circle cx="647.3" cy="438.7" r="3.4"/><circle cx="648.1" cy="448.4" r="3.7"/><circle cx="648.2" cy="457.3" r="3.7"/><circle cx="648.2" cy="466.3" r="3.3"/><circle cx="647.6" cy="474.6" r="3.6"/><circle cx="647.8" cy="483.7" r="3.7"/><circle cx="647.7" cy="492.5" r="3.4"/><circle cx="647.7" cy="501.9" r="3.5"/><circle cx="647.7" cy="510.4" r="3.4"/><circle cx="647.6" cy="519.4" r="3.5"/><circle cx="647.5" cy="528.9" r="3.6"/><circle cx="647.4" cy="537.8" r="3.4"/><circle cx="647.7" cy="546.7" r="3.7"/><circle cx="648.2" cy="555.8" r="3.3"/><circle cx="656.8" cy="420.8" r="3.2"/><circle cx="656.8" cy="429.9" r="3.7"/><circle cx="656.5" cy="439.3" r="3.5"/><circle cx="656.3" cy="448.1" r="3.4"/><circle cx="656.8" cy="456.5" r="3.2"/><circle cx="657.1" cy="465.4" r="3.3"/><circle cx="656.4" cy="474.4" r="3.7"/><circle cx="657.2" cy="484.0" r="3.4"/><circle cx="657.1" cy="492.8" r="3.3"/><circle cx="656.9" cy="501.6" r="3.4"/><circle cx="656.5" cy="510.6" r="3.3"/><circle cx="656.8" cy="520.1" r="3.5"/><circle cx="656.2" cy="528.9" r="3.2"/><circle cx="656.7" cy="538.0" r="3.6"/><circle cx="657.1" cy="546.9" r="3.4"/><circle cx="656.4" cy="555.6" r="3.6"/><circle cx="665.4" cy="420.8" r="3.6"/><circle cx="665.5" cy="430.1" r="3.5"/><circle cx="666.1" cy="438.5" r="3.3"/><circle cx="666.0" cy="448.1" r="3.3"/><circle cx="665.3" cy="456.6" r="3.5"/><circle cx="666.1" cy="465.6" r="3.3"/><circle cx="665.9" cy="474.8" r="3.7"/><circle cx="666.2" cy="484.2" r="3.6"/><circle cx="665.7" cy="492.3" r="3.7"/><circle cx="665.6" cy="501.7" r="3.6"/><circle cx="666.1" cy="510.8" r="3.8"/><circle cx="666.1" cy="519.3" r="3.4"/><circle cx="666.1" cy="528.9" r="3.8"/><circle cx="665.4" cy="537.7" r="3.8"/><circle cx="665.7" cy="546.8" r="3.8"/><circle cx="665.3" cy="555.2" r="3.7"/><circle cx="674.7" cy="420.7" r="3.7"/><circle cx="674.4" cy="429.6" r="3.4"/><circle cx="674.2" cy="438.9" r="3.7"/><circle cx="674.6" cy="448.4" r="3.2"/><circle cx="674.3" cy="456.5" r="3.5"/><circle cx="674.3" cy="466.0" r="3.5"/><circle cx="674.7" cy="475.2" r="3.7"/><circle cx="675.0" cy="483.5" r="3.4"/><circle cx="675.1" cy="492.7" r="3.4"/><circle cx="674.6" cy="501.4" r="3.7"/><circle cx="674.8" cy="510.3" r="3.8"/><circle cx="674.6" cy="519.5" r="3.6"/><circle cx="675.1" cy="528.5" r="3.2"/><circle cx="674.3" cy="537.2" r="3.5"/><circle cx="674.4" cy="547.0" r="3.3"/><circle cx="674.1" cy="555.6" r="3.3"/><circle cx="683.4" cy="420.7" r="3.3"/><circle cx="683.7" cy="430.4" r="3.4"/><circle cx="683.7" cy="438.8" r="3.7"/><circle cx="683.6" cy="447.4" r="3.6"/><circle cx="683.3" cy="456.4" r="3.2"/><circle cx="683.9" cy="466.1" r="3.4"/><circle cx="683.6" cy="475.0" r="3.2"/><circle cx="683.8" cy="484.0" r="3.8"/><circle cx="683.1" cy="492.9" r="3.5"/><circle cx="683.9" cy="501.6" r="3.6"/><circle cx="684.0" cy="510.6" r="3.5"/><circle cx="684.0" cy="519.2" r="3.8"/><circle cx="683.4" cy="528.6" r="3.4"/><circle cx="683.9" cy="537.7" r="3.6"/><circle cx="683.2" cy="547.0" r="3.7"/><circle cx="683.8" cy="555.3" r="3.4"/><circle cx="692.5" cy="420.6" r="3.8"/><circle cx="692.4" cy="430.4" r="3.3"/><circle cx="692.7" cy="439.2" r="3.6"/><circle cx="692.5" cy="447.4" r="3.5"/><circle cx="692.4" cy="457.3" r="3.8"/><circle cx="693.0" cy="466.3" r="3.3"/><circle cx="692.1" cy="474.6" r="3.2"/><circle cx="692.2" cy="483.9" r="3.3"/><circle cx="692.6" cy="492.7" r="3.4"/><circle cx="693.0" cy="501.4" r="3.7"/><circle cx="692.6" cy="510.9" r="3.3"/><circle cx="692.8" cy="520.1" r="3.3"/><circle cx="692.5" cy="528.8" r="3.5"/><circle cx="692.8" cy="537.8" r="3.4"/><circle cx="692.7" cy="546.9" r="3.5"/><circle cx="692.6" cy="555.7" r="3.5"/><circle cx="701.1" cy="420.9" r="3.7"/><circle cx="701.7" cy="429.5" r="3.5"/><circle cx="701.6" cy="439.0" r="3.3"/><circle cx="701.6" cy="448.1" r="3.5"/><circle cx="701.9" cy="457.0" r="3.2"/><circle cx="701.3" cy="466.1" r="3.2"/><circle cx="702.0" cy="475.0" r="3.7"/><circle cx="701.2" cy="483.3" r="3.7"/><circle cx="701.5" cy="492.7" r="3.5"/><circle cx="701.8" cy="501.6" r="3.7"/><circle cx="701.1" cy="511.2" r="3.6"/><circle cx="701.3" cy="519.7" r="3.7"/><circle cx="701.3" cy="528.9" r="3.7"/><circle cx="701.9" cy="537.4" r="3.7"/><circle cx="701.6" cy="546.9" r="3.2"/><circle cx="701.4" cy="555.6" r="3.7"/><circle cx="710.4" cy="420.5" r="3.3"/><circle cx="710.8" cy="430.4" r="3.5"/><circle cx="710.0" cy="439.2" r="3.7"/><circle cx="710.2" cy="447.9" r="3.4"/><circle cx="710.0" cy="457.1" r="3.3"/><circle cx="710.0" cy="466.3" r="3.3"/><circle cx="710.7" cy="475.2" r="3.4"/><circle cx="710.3" cy="483.5" r="3.6"/><circle cx="710.9" cy="493.0" r="3.5"/><circle cx="710.5" cy="501.7" r="3.6"/><circle cx="710.2" cy="510.5" r="3.6"/><circle cx="710.2" cy="520.2" r="3.6"/><circle cx="710.1" cy="528.2" r="3.6"/><circle cx="710.1" cy="537.7" r="3.6"/><circle cx="710.7" cy="546.5" r="3.5"/><circle cx="710.8" cy="555.2" r="3.4"/><circle cx="719.7" cy="420.9" r="3.8"/><circle cx="719.0" cy="429.6" r="3.4"/><circle cx="719.4" cy="438.8" r="3.3"/><circle cx="719.3" cy="448.3" r="3.8"/><circle cx="719.5" cy="456.6" r="3.5"/><circle cx="719.1" cy="465.4" r="3.7"/><circle cx="719.2" cy="474.5" r="3.7"/><circle cx="719.0" cy="483.5" r="3.3"/><circle cx="719.8" cy="493.0" r="3.3"/><circle cx="719.0" cy="502.2" r="3.3"/><circle cx="719.6" cy="510.9" r="3.6"/><circle cx="719.4" cy="519.6" r="3.4"/><circle cx="719.5" cy="528.3" r="3.5"/><circle cx="719.2" cy="537.5" r="3.7"/><circle cx="719.5" cy="546.8" r="3.6"/><circle cx="718.9" cy="555.9" r="3.7"/><circle cx="728.6" cy="421.0" r="3.7"/><circle cx="728.8" cy="429.8" r="3.3"/><circle cx="728.2" cy="438.5" r="3.3"/><circle cx="727.9" cy="447.4" r="3.4"/><circle cx="727.9" cy="456.9" r="3.7"/><circle cx="728.6" cy="465.4" r="3.6"/><circle cx="728.0" cy="475.1" r="3.6"/><circle cx="728.4" cy="483.7" r="3.8"/><circle cx="728.1" cy="493.2" r="3.3"/><circle cx="727.9" cy="501.5" r="3.2"/><circle cx="728.7" cy="510.4" r="3.5"/><circle cx="728.1" cy="519.6" r="3.7"/><circle cx="728.4" cy="528.4" r="3.6"/><circle cx="728.0" cy="537.2" r="3.6"/><circle cx="728.7" cy="546.9" r="3.6"/><circle cx="728.8" cy="556.0" r="3.5"/><circle cx="737.0" cy="421.1" r="3.5"/><circle cx="737.5" cy="429.8" r="3.2"/><circle cx="737.0" cy="438.6" r="3.6"/><circle cx="737.5" cy="448.0" r="3.4"/><circle cx="737.5" cy="456.8" r="3.5"/><circle cx="737.0" cy="466.4" r="3.5"/><circle cx="737.3" cy="474.5" r="3.5"/><circle cx="737.3" cy="483.7" r="3.6"/><circle cx="737.1" cy="492.9" r="3.6"/><circle cx="736.9" cy="502.1" r="3.2"/><circle cx="737.1" cy="511.1" r="3.3"/><circle cx="737.1" cy="519.6" r="3.8"/><circle cx="737.8" cy="528.4" r="3.6"/><circle cx="737.6" cy="537.7" r="3.4"/><circle cx="737.0" cy="546.2" r="3.2"/><circle cx="736.8" cy="555.8" r="3.6"/></g><rect x="608" y="486.5" width="6.5" height="3.6" rx="1" fill="#f0e820"/><rect x="725" y="486.3" width="6.5" height="3.6" rx="1" fill="#f0e820"/><path d="M749 442.5 L755 448 L749 453.5" fill="none" stroke="#fff" stroke-width="1.3"/><path d="M749 457 L756 463 L749 469 Z" fill="#fff"/></svg>
<span class="t " style="left:731.5px;top:441.9px;font-size:9.8px;line-height:11.8px;color:#eee;">MR</span>
<span class="t " style="left:733px;top:457.1px;font-size:9.8px;line-height:11.8px;color:#eee;">M1</span>
<div style="left:771px;top:372px;width:381px;height:283.5px;background:#c6c6c6;"></div>
<div style="left:768.5px;top:372px;width:5.0px;height:283.5px;background:linear-gradient(90deg,#ececec,#d0d0d0 45%,#a4a4a4 85%,#b0b0b0);"></div>
<div class="wt" style="left:772.5px;top:373.5px;width:379.5px;height:20.0px;"></div>
<svg style="left:778px;top:376px" width="14" height="14" viewBox="0 0 14 14"><rect width="14" height="14" rx="1.5" fill="#1a1a1a"/><rect x="1" y="2" width="3" height="10" fill="#5a5a5a"/><rect x="10" y="2" width="3" height="10" fill="#5a5a5a"/><rect x="5.5" y="4" width="3" height="6" fill="#e8e020"/></svg>
<span class="t " style="left:796px;top:376.2px;font-size:12.6px;line-height:15.1px;font-weight:bold;color:#ececec;text-shadow:0 0 1.5px #9a9a9a;">Time Overview</span>
<div style="left:1112px;top:375.0px;width:15.5px;height:16.0px;border:1px solid #d8d8d8;border-radius:3px;background:linear-gradient(#cdcdcd,#c2c2c2);"></div>
<div style="left:1116px;top:379.0px;width:8px;height:8.0px;border:1.3px solid #dcdcdc;border-top-width:2.6px;border-radius:1px;"></div>
<div style="left:1131.5px;top:375.0px;width:15.5px;height:16.0px;border:1px solid #d8d8d8;border-radius:3px;background:linear-gradient(#cdcdcd,#c2c2c2);"></div>
<svg style="left:1131.5px;top:375.0px;" width="15.5" height="16" viewBox="0 0 15.5 16"><path d="M4 4 L11.5 12 M11.5 4 L4 12" stroke="#e0e0e0" stroke-width="1.9"/></svg>
<div style="left:773.5px;top:393.5px;width:2.5px;height:262.0px;background:linear-gradient(90deg,#b4b4b4,#e0e0e0);"></div>
<div style="left:776px;top:393.5px;width:372.3px;height:258.5px;background:#fefefe;"></div>
<span class="t " style="left:780px;top:400.6px;font-size:11.6px;line-height:13.9px;color:#3a3a3a;">Time:</span>
<div style="left:780.5px;top:416.7px;width:80.0px;height:18.0px;border:1px solid #d0d0d0;background:#fff;"></div>
<span class="t " style="left:784.3px;top:419.1px;font-size:11.6px;line-height:13.9px;color:#3a3a3a;letter-spacing:-0.58px;">Analysis</span>
<div style="left:846.7px;top:418px;width:12.3px;height:15.5px;border:1.6px solid #4aa0e0;border-radius:3px;background:linear-gradient(#fff,#e8e8e8);box-shadow:0 0 0 1px #c0e0f6;"></div>
<svg style="left:849px;top:422.5px;" width="8" height="6" viewBox="0 0 8 6"><path d="M1 1 L4 4.2 L7 1" fill="none" stroke="#3c94d6" stroke-width="1.6"/></svg>
<span class="t " style="left:779px;top:453.6px;font-size:11.6px;line-height:13.9px;color:#3a3a3a;">Offset:</span>
<div class="tb" style="left:781px;top:468px;width:74px;height:18.7px;"></div>
<span class="t " style="left:785.5px;top:470.9px;font-size:11.6px;line-height:13.9px;color:#3a3a3a;font-style:italic;">-22.294 us</span>
<span class="t " style="left:779px;top:492.1px;font-size:11.6px;line-height:13.9px;color:#3a3a3a;">Length:</span>
<div class="tb" style="left:781px;top:507.5px;width:74px;height:18.5px;"></div>
<span class="t " style="left:784.5px;top:510.3px;font-size:11.6px;line-height:13.9px;color:#3a3a3a;">473.856 us</span>
<span class="t " style="left:788px;top:558.0px;font-size:11.6px;line-height:13.9px;color:#3a3a3a;">dB/div:</span>
<svg style="left:779px;top:569.3px;" width="7.6" height="6.8" viewBox="0 0 9 8"><ellipse cx="4.4" cy="4.9" rx="3.8" ry="2.5" fill="#5a4cc0"/><ellipse cx="4.4" cy="3.9" rx="3.9" ry="2.1" fill="#2a2a30"/><ellipse cx="4.2" cy="2.9" rx="3.1" ry="1.9" fill="#b4b8c0"/><ellipse cx="3.6" cy="2.2" rx="1.9" ry="1.5" fill="#48a830"/></svg>
<span class="t " style="left:792.7px;top:573.0px;font-size:11.6px;line-height:13.9px;color:#3a3a3a;">10.0 dB</span>
<div class="btn" style="left:779.5px;top:630px;width:66.5px;height:19px;"></div>
<span class="t " style="left:788px;top:632.6px;font-size:11.6px;line-height:13.9px;color:#3a3a3a;">Autoscale</span>
<span class="t" style="right:257px;top:401.1px;font-size:11.6px;line-height:13.9px;color:#3a3a3a;">4.4</span>
<div style="left:908.5px;top:407.2px;width:3.0px;height:1.4px;background:#555;"></div>
<span class="t" style="right:257px;top:443.6px;font-size:11.6px;line-height:13.9px;color:#3a3a3a;">-15.6</span>
<div style="left:908.5px;top:449.7px;width:3.0px;height:1.4px;background:#555;"></div>
<span class="t" style="right:257px;top:485.8px;font-size:11.6px;line-height:13.9px;color:#3a3a3a;">-35.6</span>
<div style="left:908.5px;top:491.9px;width:3.0px;height:1.4px;background:#555;"></div>
<span class="t" style="right:257px;top:529.5px;font-size:11.6px;line-height:13.9px;color:#3a3a3a;">-55.6</span>
<div style="left:908.5px;top:535.7px;width:3.0px;height:1.4px;background:#555;"></div>
<span class="t" style="right:257px;top:571.5px;font-size:11.6px;line-height:13.9px;color:#3a3a3a;">-75.6</span>
<div style="left:908.5px;top:577.7px;width:3.0px;height:1.4px;background:#555;"></div>
<span class="t" style="right:257px;top:614.0px;font-size:11.6px;line-height:13.9px;color:#3a3a3a;">-95.6</span>
<div style="left:908.5px;top:620.2px;width:3.0px;height:1.4px;background:#555;"></div>
<svg style="left:917px;top:639.8px;" width="7.6" height="6.8" viewBox="0 0 9 8"><ellipse cx="4.4" cy="4.9" rx="3.8" ry="2.5" fill="#5a4cc0"/><ellipse cx="4.4" cy="3.9" rx="3.9" ry="2.1" fill="#2a2a30"/><ellipse cx="4.2" cy="2.9" rx="3.1" ry="1.9" fill="#b4b8c0"/><ellipse cx="3.6" cy="2.2" rx="1.9" ry="1.5" fill="#48a830"/></svg>
<span class="t " style="left:930.7px;top:636.4px;font-size:11.05px;line-height:13.3px;color:#3a3a3a;">Position:</span>
<span class="t " style="left:980.5px;top:636.0px;font-size:11.6px;line-height:13.9px;color:#3a3a3a;">-68.956</span>
<svg style="left:1022.5px;top:639.8px;" width="7.6" height="6.8" viewBox="0 0 9 8"><ellipse cx="4.4" cy="4.9" rx="3.8" ry="2.5" fill="#5a4cc0"/><ellipse cx="4.4" cy="3.9" rx="3.9" ry="2.1" fill="#2a2a30"/><ellipse cx="4.2" cy="2.9" rx="3.1" ry="1.9" fill="#b4b8c0"/><ellipse cx="3.6" cy="2.2" rx="1.9" ry="1.5" fill="#48a830"/></svg>
<span class="t " style="left:1037.6px;top:636.8px;font-size:10.4px;line-height:12.5px;color:#3a3a3a;">Scale:</span>
<span class="t " style="left:1080px;top:636.0px;font-size:11.6px;line-height:13.9px;color:#3a3a3a;">626.884 us</span>
<svg style="left:0;top:0" width="1160" height="660" viewBox="0 0 1160 660"><rect x="916" y="400" width="222" height="229" fill="#ebebeb"/><rect x="916" y="407.5" width="222" height="210.5" fill="#505050"/><rect x="933" y="407.5" width="167.5" height="210.5" fill="#000"/><path d="M916.0 441.0 L917.0 441.9 L918.0 442.9 L919.0 441.2 L920.0 442.3 L921.0 441.2 L922.0 442.7 L923.0 440.6 L924.0 440.8 L925.0 441.0 L926.0 443.3 L927.0 441.5 L928.0 440.6 L929.0 442.8 L930.0 443.2 L930.0 489.8 L929.0 486.3 L928.0 490.5 L927.0 488.1 L926.0 487.9 L925.0 490.2 L924.0 491.1 L923.0 487.1 L922.0 490.6 L921.0 500.5 L920.0 485.4 L919.0 485.0 L918.0 488.3 L917.0 486.4 L916.0 489.4 Z" fill="#8c8a48"/><path d="M1107.0 433.5 L1108.0 432.9 L1109.0 435.5 L1110.0 432.2 L1111.0 436.0 L1112.0 434.3 L1113.0 432.9 L1113.0 493.4 L1112.0 496.9 L1111.0 497.0 L1110.0 492.6 L1109.0 496.1 L1108.0 495.6 L1107.0 494.8 Z" fill="#8c8a48"/><path d="M1113.0 439.3 L1114.0 441.7 L1115.0 440.1 L1116.0 441.6 L1117.0 442.9 L1118.0 442.1 L1119.0 443.7 L1120.0 443.8 L1121.0 440.9 L1122.0 443.3 L1123.0 442.6 L1124.0 438.3 L1125.0 440.5 L1126.0 443.4 L1127.0 440.9 L1128.0 441.2 L1129.0 443.0 L1130.0 441.6 L1131.0 443.1 L1132.0 439.7 L1133.0 443.7 L1134.0 441.9 L1135.0 439.5 L1136.0 443.4 L1137.0 438.2 L1138.0 443.2 L1138.0 489.2 L1137.0 487.6 L1136.0 490.0 L1135.0 487.2 L1134.0 490.8 L1133.0 484.2 L1132.0 501.0 L1131.0 486.5 L1130.0 487.4 L1129.0 490.4 L1128.0 495.9 L1127.0 486.0 L1126.0 491.9 L1125.0 492.7 L1124.0 486.1 L1123.0 487.9 L1122.0 497.4 L1121.0 487.0 L1120.0 488.7 L1119.0 487.3 L1118.0 489.4 L1117.0 490.2 L1116.0 491.1 L1115.0 491.4 L1114.0 485.4 L1113.0 488.9 Z" fill="#8c8a48"/><path d="M938.2 407.5 V618 M960.4 407.5 V618 M982.6 407.5 V618 M1004.8 407.5 V618 M1027.0 407.5 V618 M1049.2 407.5 V618 M1071.4 407.5 V618 M1093.6 407.5 V618 M1115.8 407.5 V618 M916 429.6 H1138 M916 450.7 H1138 M916 471.8 H1138 M916 492.9 H1138 M916 514.0 H1138 M916 535.1 H1138 M916 556.2 H1138 M916 577.3 H1138 M916 598.4 H1138 " stroke="#7c7c7c" stroke-width="1.1" fill="none"/><path d="M941.0 440.1 L941.8 439.3 L942.6 440.5 L943.4 441.0 L944.2 438.7 L945.0 439.2 L945.8 439.5 L946.6 439.5 L947.4 440.0 L948.2 439.0 L949.0 440.6 L949.8 440.5 L950.6 438.9 L951.4 439.6 L952.2 439.0 L953.0 440.7 L953.8 438.8 L954.6 440.0 L955.4 439.3 L956.2 439.3 L957.0 440.6 L957.8 440.0 L958.6 438.9 L959.4 440.6 L960.2 440.3 L961.0 440.9 L961.8 439.3 L962.6 440.3 L963.4 441.3 L964.2 439.5 L965.0 438.9 L965.8 440.6 L966.6 440.5 L967.4 440.4 L968.2 439.5 L969.0 439.1 L969.8 439.4 L970.6 439.9 L971.4 439.4 L972.2 439.4 L973.0 438.8 L973.8 440.5 L974.6 438.8 L975.4 439.3 L976.2 438.9 L977.0 441.0 L977.8 440.8 L978.6 439.7 L979.4 440.9 L980.2 438.7 L981.0 440.6 L981.8 440.8 L982.6 439.9 L983.4 439.4 L984.2 440.3 L985.0 440.0 L985.8 438.9 L986.6 440.5 L987.4 441.1 L988.2 440.5 L989.0 438.9 L989.8 439.6 L990.6 439.2 L991.4 439.1 L992.2 441.1 L993.0 441.0 L993.8 441.2 L994.6 441.1 L995.4 440.3 L996.2 440.4 L997.0 440.1 L997.8 440.1 L998.6 441.0 L999.4 439.2 L1000.2 439.6 L1001.0 440.2 L1001.8 439.2 L1002.6 440.1 L1003.4 439.0 L1004.2 440.4 L1005.0 440.4 L1005.8 439.7 L1006.6 439.9 L1007.4 440.2 L1008.2 440.6 L1009.0 439.7 L1009.8 440.2 L1010.6 439.2 L1011.4 440.8 L1012.2 440.8 L1013.0 439.7 L1013.8 440.5 L1014.6 439.7 L1015.4 440.8 L1016.2 441.0 L1017.0 440.3 L1017.8 439.4 L1018.6 439.3 L1019.4 440.6 L1020.2 439.6 L1021.0 439.2 L1021.8 439.8 L1022.6 440.4 L1023.4 440.2 L1024.2 441.2 L1025.0 440.4 L1025.8 440.7 L1026.6 440.0 L1027.4 438.8 L1028.2 439.3 L1029.0 438.9 L1029.8 439.6 L1030.6 439.2 L1031.4 440.9 L1032.2 439.0 L1033.0 439.2 L1033.8 438.9 L1034.6 439.0 L1035.4 440.8 L1036.2 438.7 L1037.0 441.1 L1037.8 438.8 L1038.6 440.7 L1039.4 438.9 L1040.2 440.6 L1041.0 440.4 L1041.8 440.8 L1042.6 438.9 L1043.4 440.7 L1044.2 439.0 L1045.0 439.3 L1045.8 439.8 L1046.6 439.9 L1047.4 439.2 L1048.2 439.6 L1049.0 439.8 L1049.8 441.0 L1050.6 439.3 L1051.4 440.6 L1052.2 439.4 L1053.0 440.5 L1053.8 441.0 L1054.6 440.7 L1055.4 441.0 L1056.2 439.6 L1057.0 439.1 L1057.8 439.4 L1058.6 440.3 L1059.4 441.0 L1060.2 441.2 L1061.0 440.0 L1061.8 439.8 L1062.6 439.0 L1063.4 438.9 L1064.2 438.8 L1065.0 439.5 L1065.8 439.8 L1066.6 439.0 L1067.4 440.9 L1068.2 439.5 L1069.0 439.1 L1069.8 439.6 L1070.6 439.4 L1071.4 439.1 L1072.2 440.8 L1073.0 440.1 L1073.8 440.3 L1074.6 439.0 L1075.4 439.4 L1076.2 440.8 L1077.0 440.6 L1077.8 439.5 L1078.6 441.3 L1079.4 441.1 L1080.2 440.7 L1081.0 441.3 L1081.8 438.9 L1082.6 441.1 L1083.4 439.0 L1084.2 438.8 L1085.0 440.3 L1085.8 441.2 L1086.6 439.6 L1087.4 439.8 L1088.2 440.7 L1089.0 439.1 L1089.8 439.4 L1090.6 439.0 L1091.4 439.2 L1092.2 439.5 L1093.0 439.9 L1093.8 439.5 L1094.6 440.1 L1095.4 441.1 L1095.4 484.5 L1094.6 489.2 L1093.8 487.9 L1093.0 489.4 L1092.2 490.0 L1091.4 484.3 L1090.6 492.1 L1089.8 485.4 L1089.0 485.9 L1088.2 500.0 L1087.4 497.1 L1086.6 487.8 L1085.8 486.2 L1085.0 482.6 L1084.2 497.2 L1083.4 489.7 L1082.6 483.6 L1081.8 488.9 L1081.0 490.5 L1080.2 483.8 L1079.4 486.4 L1078.6 482.8 L1077.8 486.2 L1077.0 484.3 L1076.2 490.2 L1075.4 484.1 L1074.6 490.9 L1073.8 483.6 L1073.0 490.2 L1072.2 483.7 L1071.4 489.6 L1070.6 497.9 L1069.8 488.1 L1069.0 485.3 L1068.2 488.7 L1067.4 503.5 L1066.6 485.3 L1065.8 485.8 L1065.0 486.3 L1064.2 498.7 L1063.4 486.4 L1062.6 489.8 L1061.8 488.4 L1061.0 491.3 L1060.2 486.8 L1059.4 490.6 L1058.6 489.1 L1057.8 484.6 L1057.0 485.8 L1056.2 485.6 L1055.4 484.4 L1054.6 488.5 L1053.8 503.0 L1053.0 486.6 L1052.2 487.7 L1051.4 487.1 L1050.6 488.2 L1049.8 485.2 L1049.0 490.7 L1048.2 483.8 L1047.4 486.7 L1046.6 487.3 L1045.8 488.6 L1045.0 485.6 L1044.2 488.4 L1043.4 483.4 L1042.6 485.1 L1041.8 482.5 L1041.0 488.3 L1040.2 495.5 L1039.4 491.3 L1038.6 503.6 L1037.8 486.8 L1037.0 485.4 L1036.2 484.9 L1035.4 487.0 L1034.6 484.0 L1033.8 484.3 L1033.0 488.7 L1032.2 485.9 L1031.4 495.1 L1030.6 483.5 L1029.8 489.8 L1029.0 501.1 L1028.2 487.6 L1027.4 488.2 L1026.6 484.1 L1025.8 488.1 L1025.0 485.5 L1024.2 485.6 L1023.4 486.3 L1022.6 482.2 L1021.8 483.2 L1021.0 496.4 L1020.2 488.2 L1019.4 484.1 L1018.6 484.0 L1017.8 488.6 L1017.0 483.4 L1016.2 482.7 L1015.4 505.9 L1014.6 484.4 L1013.8 490.3 L1013.0 488.0 L1012.2 486.8 L1011.4 495.5 L1010.6 484.2 L1009.8 487.5 L1009.0 482.0 L1008.2 491.5 L1007.4 489.7 L1006.6 482.3 L1005.8 497.7 L1005.0 484.4 L1004.2 489.4 L1003.4 484.3 L1002.6 490.6 L1001.8 483.0 L1001.0 482.3 L1000.2 492.8 L999.4 487.2 L998.6 494.8 L997.8 489.4 L997.0 507.4 L996.2 483.6 L995.4 487.8 L994.6 498.2 L993.8 485.7 L993.0 487.1 L992.2 502.6 L991.4 490.2 L990.6 488.8 L989.8 487.1 L989.0 494.5 L988.2 489.0 L987.4 487.2 L986.6 493.6 L985.8 482.4 L985.0 496.0 L984.2 495.4 L983.4 485.4 L982.6 489.7 L981.8 487.8 L981.0 494.1 L980.2 503.3 L979.4 490.9 L978.6 501.7 L977.8 493.5 L977.0 499.8 L976.2 485.0 L975.4 482.1 L974.6 487.8 L973.8 482.2 L973.0 489.8 L972.2 483.8 L971.4 483.7 L970.6 486.2 L969.8 485.6 L969.0 500.3 L968.2 484.4 L967.4 504.9 L966.6 484.0 L965.8 502.9 L965.0 484.9 L964.2 496.9 L963.4 482.1 L962.6 489.9 L961.8 490.8 L961.0 488.7 L960.2 489.3 L959.4 490.5 L958.6 486.6 L957.8 488.1 L957.0 495.4 L956.2 488.8 L955.4 482.5 L954.6 485.7 L953.8 488.2 L953.0 486.3 L952.2 497.3 L951.4 485.1 L950.6 489.8 L949.8 487.0 L949.0 491.3 L948.2 487.8 L947.4 487.3 L946.6 490.6 L945.8 482.4 L945.0 501.9 L944.2 500.4 L943.4 489.4 L942.6 500.5 L941.8 492.5 L941.0 485.1 Z" fill="#f4f030"/><path d="M932.5 521.0 L933.2 520.1 L933.9 520.4 L934.6 520.9 L935.3 520.1 L936.0 520.2 L936.7 520.5 L937.4 520.8 L938.1 520.4 L938.8 520.3 L939.5 520.0 L940.2 520.2 L940.9 520.9 L940.9 566.0 L940.2 566.4 L939.5 563.3 L938.8 566.5 L938.1 566.5 L937.4 562.9 L936.7 565.4 L936.0 565.3 L935.3 563.3 L934.6 566.1 L933.9 575.4 L933.2 588.8 L932.5 565.2 Z" fill="#f4f030"/><path d="M1096.0 519.5 L1096.7 519.1 L1097.4 519.3 L1098.1 520.0 L1098.8 519.8 L1099.5 519.2 L1100.2 519.7 L1100.9 519.8 L1100.9 560.1 L1100.2 557.5 L1099.5 560.8 L1098.8 558.4 L1098.1 565.2 L1097.4 569.2 L1096.7 559.3 L1096.0 560.8 Z" fill="#f4f030"/><path d="M1102 520 V571 M1104 524 V566 M1106 530 V552" stroke="#8c8a48" stroke-width="1.3"/><path d="M946.5 487 V527 M951 487 V508" stroke="#f4f030" stroke-width="1.5"/><path d="M916 485.7 H1138" stroke="#c8c8c8" stroke-width="1.1"/><path d="M918.5 493.4 H932.5 V534.3 H918.5 Z" fill="#7c7c7c" opacity="0.8" stroke="#a8a8a8" stroke-width="1"/><path d="M918.5 493.4 L932.5 507 M918.5 534.3 L932.5 520.5" stroke="#b0b0b0" stroke-width="0.8"/><path d="M1101 493.4 H1116 V534.3 H1101 Z" fill="#7c7c7c" opacity="0.8" stroke="#a8a8a8" stroke-width="1"/><path d="M1116 493.4 L1101 507 M1116 534.3 L1101 520.5" stroke="#b0b0b0" stroke-width="0.8"/><rect x="933" y="403.7" width="167.7" height="3.8" fill="#1414f0"/><rect x="940.7" y="400" width="16.3" height="3" fill="#f01414"/><rect x="941" y="618" width="155" height="5" fill="#ff10e0"/><path d="M939 623.8 H944.5 M941.7 623.8 V629" stroke="#e02020" stroke-width="1.2"/><rect x="925.5" y="416.7" width="144.5" height="22.5" fill="#101010" opacity="0.9"/><rect x="998" y="439" width="76.5" height="25.2" fill="#5c5a18" opacity="0.92"/><path d="M916 417 H925.5 V432 L916 441 Z" fill="#101010"/><path d="M916 432 L925.5 441 V447 L916 441" fill="#fff"/></svg>
<span class="t " style="left:927px;top:416.5px;font-size:10.0px;line-height:12.0px;color:#e8e8e8;">MR: -12.46 dBm</span>
<span class="t " style="left:997.5px;top:416.5px;font-size:10.0px;line-height:12.0px;color:#e8e8e8;">M1: -12.46 dBm</span>
<span class="t " style="left:927.5px;top:428.0px;font-size:10.0px;line-height:12.0px;color:#e8e8e8;">-68.954 us</span>
<span class="t " style="left:998.7px;top:428.0px;font-size:10.0px;line-height:12.0px;color:#e8e8e8;">-68.954 us</span>
<span class="t " style="left:998.7px;top:439.5px;font-size:10.0px;line-height:12.0px;color:#e8e8e8;">ΔM1: 0.00 dB</span>
<span class="t " style="left:998.7px;top:450.8px;font-size:10.0px;line-height:12.0px;color:#e8e8e8;">0.000 s</span>
<span class="t " style="left:917px;top:420.3px;font-size:9.5px;line-height:11.4px;color:#fff;">1</span>
<div style="left:9px;top:655.5px;width:1144px;height:34.0px;background:#fff;"></div>
<span class="t " style="left:11px;top:665.2px;font-size:13.8px;line-height:16.6px;color:#2a2a2a;">WLAN Summ</span>
<span class="t " style="left:116.5px;top:665.5px;font-size:13.4px;line-height:16.1px;color:#2a2a2a;">Frequency</span>
<div class="tb" style="left:187px;top:661.5px;width:87px;height:22.5px;"></div>
<span class="t " style="left:191px;top:665.4px;font-size:13.6px;line-height:16.3px;color:#2a2a2a;">5.25000 GHz</span>
<span class="t " style="left:371px;top:665.5px;font-size:13.4px;line-height:16.1px;color:#2a2a2a;">Ref Lev</span>
<div class="tb" style="left:425px;top:661.5px;width:87.5px;height:22.5px;"></div>
<span class="t " style="left:428.5px;top:665.4px;font-size:13.6px;line-height:16.3px;color:#2a2a2a;">-32.00 dBm</span>
<div class="btn" style="left:1007.5px;top:661.5px;width:56.0px;height:22.0px;"></div>
<span class="t " style="left:1010.7px;top:665.4px;font-size:13.6px;line-height:16.3px;color:#2a2a2a;">Markers</span>
<div class="btn" style="left:1069px;top:661.5px;width:48.5px;height:22.0px;"></div>
<span class="t " style="left:1072.6px;top:665.4px;font-size:13.6px;line-height:16.3px;color:#2a2a2a;">Traces</span>
<div class="btn" style="left:1122px;top:660.5px;width:23.5px;height:24.0px;"></div>
<svg style="left:1123.5px;top:662px;" width="21" height="21" viewBox="0 0 21 21"><path d="M18.04 8.92 L20.71 9.14 L20.71 11.86 L18.04 12.08 L16.94 14.71 L18.68 16.76 L16.76 18.68 L14.71 16.94 L12.08 18.04 L11.86 20.71 L9.14 20.71 L8.92 18.04 L6.29 16.94 L4.24 18.68 L2.32 16.76 L4.06 14.71 L2.96 12.08 L0.29 11.86 L0.29 9.14 L2.96 8.92 L4.06 6.29 L2.32 4.24 L4.24 2.32 L6.29 4.06 L8.92 2.96 L9.14 0.29 L11.86 0.29 L12.08 2.96 L14.71 4.06 L16.76 2.32 L18.68 4.24 L16.94 6.29 Z M15.10 10.50 A4.6 4.6 0 1 0 5.90 10.50 A4.6 4.6 0 1 0 15.10 10.50 Z" fill="#111" fill-rule="evenodd"/></svg>
<div style="left:9px;top:689.5px;width:1144px;height:28.0px;background:linear-gradient(#fdfdfd,#f4f4f4 55%,#d6d6d6);border:1px solid #4f9fd6;"></div>
<div style="left:100.0px;top:692px;width:1.5px;height:23.5px;background:linear-gradient(90deg,#c4c4c4,#fff);"></div>
<div style="left:363.0px;top:692px;width:1.5px;height:23.5px;background:linear-gradient(90deg,#c4c4c4,#fff);"></div>
<div style="left:427.0px;top:692px;width:1.5px;height:23.5px;background:linear-gradient(90deg,#c4c4c4,#fff);"></div>
<div style="left:525.5px;top:692px;width:1.5px;height:23.5px;background:linear-gradient(90deg,#c4c4c4,#fff);"></div>
<div style="left:590.5px;top:692px;width:1.5px;height:23.5px;background:linear-gradient(90deg,#c4c4c4,#fff);"></div>
<div style="left:667.0px;top:692px;width:1.5px;height:23.5px;background:linear-gradient(90deg,#c4c4c4,#fff);"></div>
<div style="left:742.0px;top:692px;width:1.5px;height:23.5px;background:linear-gradient(90deg,#c4c4c4,#fff);"></div>
<div style="left:793.5px;top:692px;width:1.5px;height:23.5px;background:linear-gradient(90deg,#c4c4c4,#fff);"></div>
<span class="t " style="left:16.5px;top:697.0px;font-size:10.8px;line-height:13.0px;color:#2a2a2a;">Stopped</span>
<span class="t " style="left:106.5px;top:697.0px;font-size:10.79px;line-height:12.9px;color:#2a2a2a;">Acq BW: 200.00 MHz, Acq Length: 572.873 us</span>
<svg style="left:1124px;top:695px" width="18" height="17" viewBox="0 0 18 17"><path d="M1.5 15.5 L4.2 7 L10 12.6 Z M16 1.5 L13.3 10 L7.5 4.4 Z" fill="#e6242e"/><path d="M5.5 11.5 L12 5.5" stroke="#c4141e" stroke-width="2.6"/></svg>
</div></body></html>
